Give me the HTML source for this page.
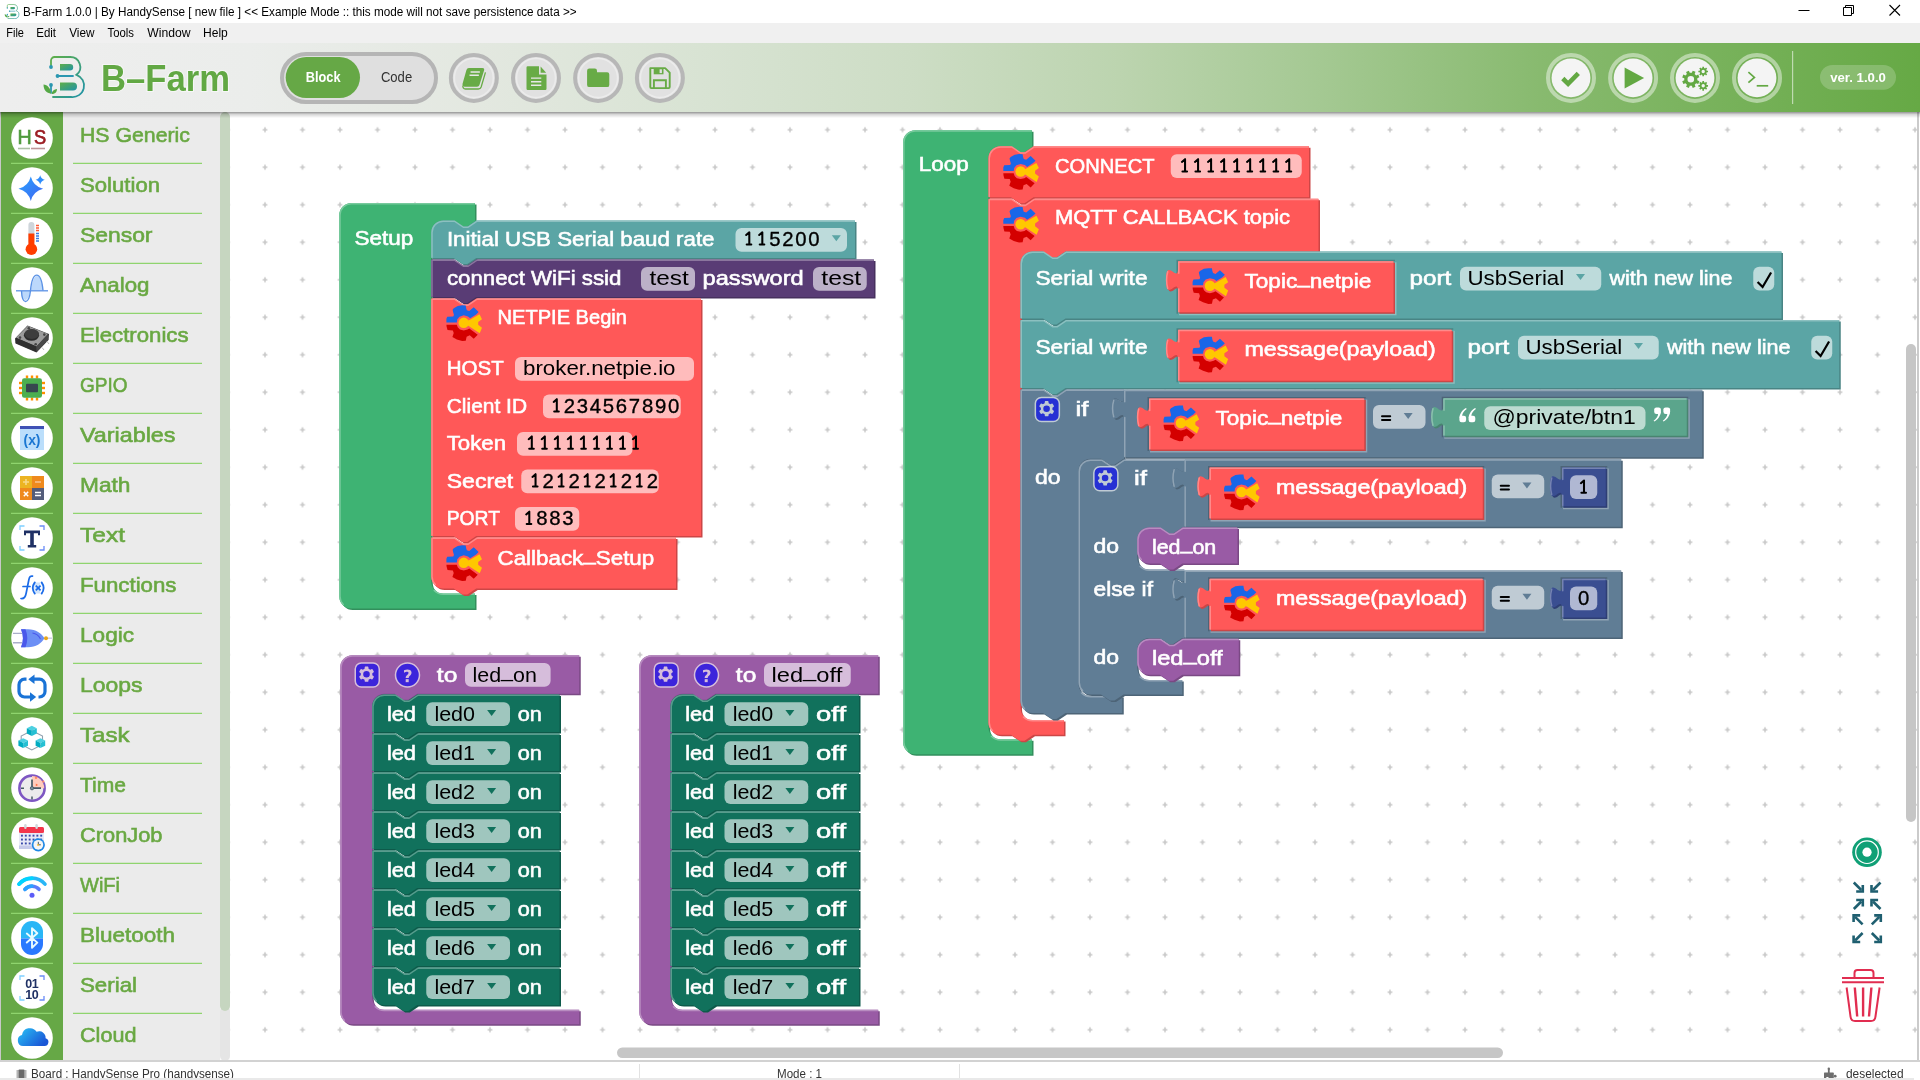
<!DOCTYPE html>
<html><head><meta charset="utf-8"><title>B-Farm</title>
<style>
html,body{margin:0;padding:0;background:#fff;}
body{width:1920px;height:1080px;overflow:hidden;position:relative;font-family:'Liberation Sans', sans-serif;}
#titlebar{position:absolute;left:0;top:0;width:1920px;height:23px;background:#fff;}
#menubar{position:absolute;left:0;top:23px;width:1920px;height:20px;background:#f0f0f0;}
#header{position:absolute;left:0;top:43px;width:1920px;height:69px;background:linear-gradient(90deg,#eeeeee 0%,#ebedeb 13%,#e3e8e0 25%,#d8e3d3 36.5%,#cdddc5 47.4%,#bcd4af 58.3%,#a3c891 69.3%,#88ba6f 80.2%,#66a945 100%);z-index:3;}
#hshadow{position:absolute;left:0;top:112px;width:1920px;height:6px;background:linear-gradient(180deg,rgba(0,0,0,0.42),rgba(0,0,0,0.16) 40%,rgba(0,0,0,0));z-index:3;}
#greenbar{position:absolute;left:1px;top:112px;width:62px;height:950px;background:#66a846;}
#catpanel{position:absolute;left:63px;top:112px;width:157px;height:950px;background:#ebebeb;}
#sbtrack{position:absolute;left:220px;top:112px;width:10px;height:950px;background:#fbfbfb;}
#sbthumb{position:absolute;left:220px;top:112px;width:10px;height:898.5px;background:#c6d6c0;border-radius:5px;}
#sbtail{position:absolute;left:220px;top:1006px;width:10px;height:54.5px;background:#e5e5e5;border-radius:5px;}
#leftline{position:absolute;left:0;top:112px;width:1px;height:950px;background:#c8c8c8;}
#status{position:absolute;left:0;top:1060px;width:1920px;height:20px;background:#fff;border-top:2px solid #d2d2d2;box-sizing:border-box;z-index:2;}
#botline{position:absolute;left:0;top:1078.3px;width:1914px;height:2px;background:#e9e9e9;z-index:6;}
#rightline{position:absolute;left:1917.4px;top:112px;width:1.6px;height:950px;background:#cbcbcb;}
svg{position:absolute;left:0;top:0;will-change:transform;}
text{font-family:'Liberation Sans', sans-serif;}
</style></head><body>
<div id="titlebar"></div><div id="menubar"></div>
<div id="greenbar"></div><div id="catpanel"></div><div id="sbtrack"></div><div id="sbtail"></div><div id="sbthumb"></div><div id="leftline"></div><div id="rightline"></div>
<svg width="1920" height="1080" viewBox="0 0 1920 1080" style="z-index:1">
<defs><pattern id="grid" patternUnits="userSpaceOnUse" width="37.5" height="37.5" x="246.25" y="111"><path d="M 16.35,18.75 h 4.8 M 18.75,16.35 v 4.8" stroke="#c9c9c9" stroke-width="1.6" fill="none"/></pattern><clipPath id="wsclip"><rect x="230" y="113" width="1688" height="949"/></clipPath></defs>
<g clip-path="url(#wsclip)">
<rect x="230" y="113" width="1688" height="949" fill="url(#grid)"/>
<path d="M 339.25,215 a 12,12 0 0,1 12,-12 H 475 v 17.5 H 476.25 l -9,6 -4.5,0 -9,-6 h -10.5 a 12,12 0 0,0 -12,12 v 349 a 12,12 0 0,0 12,12 H 475 v 15 H 351.25 a 12,12 0 0,1 -12,-12 z" fill="#328f5c" transform="translate(1.5,1.5)"/><path d="M 339.25,215 a 12,12 0 0,1 12,-12 H 475 v 17.5 H 476.25 l -9,6 -4.5,0 -9,-6 h -10.5 a 12,12 0 0,0 -12,12 v 349 a 12,12 0 0,0 12,12 H 475 v 15 H 351.25 a 12,12 0 0,1 -12,-12 z" fill="#3eb373"/><path d="M 340,215 A 11.25,11.25 0 0,1 351.25,203.75 H 474.25 M 434.23,590.52 A 12.75,12.75 0 0,0 443.25,594.25 H 474.25 M 343.3,604.45 A 11.25,11.25 0 0,1 340,596.5 V 215" fill="none" stroke="#78ca9d" stroke-width="1.5" stroke-linecap="round"/>
<text x="354.5" y="244.5" font-size="21" fill="#fff" textLength="58.8" lengthAdjust="spacingAndGlyphs" stroke="#fff" stroke-width="0.6">Setup</text>
<path d="M 431.25,232.5 a 12,12 0 0,1 12,-12 H 453.75 l 9,6 4.5,0 9,-6 H 855 v 37.5 H 476.25 l -9,6 -4.5,0 -9,-6 H 431.25 z" fill="#498484" transform="translate(1.5,1.5)"/><path d="M 431.25,232.5 a 12,12 0 0,1 12,-12 H 453.75 l 9,6 4.5,0 9,-6 H 855 v 37.5 H 476.25 l -9,6 -4.5,0 -9,-6 H 431.25 z" fill="#5ba5a5"/><path d="M 432,232.5 A 11.25,11.25 0 0,1 443.25,221.25 H 454.5 l 9,6 4.5,0 9,-6 H 854.25 M 432,257.25 V 232.5" fill="none" stroke="#8cc0c0" stroke-width="1.5" stroke-linecap="round"/>
<text x="446.9" y="245.6" font-size="21" fill="#fff" textLength="267.6" lengthAdjust="spacingAndGlyphs" stroke="#fff" stroke-width="0.6">Initial USB Serial baud rate</text>
<rect x="735.5" y="228" width="111.5" height="23.75" rx="6" fill="#fff" fill-opacity="0.6"/>
<text x="774.94" y="245.6" font-size="21" fill="#000" stroke="#000" stroke-width="0.35" text-anchor="middle" textLength="11.3" lengthAdjust="spacingAndGlyphs">5</text><text x="787.96" y="245.6" font-size="21" fill="#000" stroke="#000" stroke-width="0.35" text-anchor="middle" textLength="11.3" lengthAdjust="spacingAndGlyphs">2</text><text x="800.98" y="245.6" font-size="21" fill="#000" stroke="#000" stroke-width="0.35" text-anchor="middle" textLength="11.3" lengthAdjust="spacingAndGlyphs">0</text><text x="814" y="245.6" font-size="21" fill="#000" stroke="#000" stroke-width="0.35" text-anchor="middle" textLength="11.3" lengthAdjust="spacingAndGlyphs">0</text><path d="M 746.2,235 l 3.1,-2.7 V 244.5 M 746.7,244.5 h 4.6 M 759.22,235 l 3.1,-2.7 V 244.5 M 759.72,244.5 h 4.6" fill="none" stroke="#000" stroke-width="2.05" stroke-linecap="round" stroke-linejoin="round"/>
<path d="M 831.8,235.3 h 9 l -4.5,6 z" fill="#5ba5a5"/>
<path d="M 431.25,259.5 H 453.75 l 9,6 4.5,0 9,-6 H 874 v 37.5 H 476.25 l -9,6 -4.5,0 -9,-6 H 431.25 z" fill="#47305e" transform="translate(1.5,1.5)"/><path d="M 431.25,259.5 H 453.75 l 9,6 4.5,0 9,-6 H 874 v 37.5 H 476.25 l -9,6 -4.5,0 -9,-6 H 431.25 z" fill="#593c75"/><path d="M 432,260.25 H 454.5 l 9,6 4.5,0 9,-6 H 873.25 M 432,296.25 V 260.25" fill="none" stroke="#8b769e" stroke-width="1.5" stroke-linecap="round"/>
<text x="446.9" y="284.75" font-size="21" fill="#fff" textLength="174.5" lengthAdjust="spacingAndGlyphs" stroke="#fff" stroke-width="0.6">connect WiFi ssid</text>
<rect x="641" y="267" width="54" height="23.75" rx="6" fill="#fff" fill-opacity="0.6"/>
<text x="649.5" y="284.75" font-size="21" fill="#000" textLength="39.25" lengthAdjust="spacingAndGlyphs">test</text>
<text x="702.5" y="284.75" font-size="21" fill="#fff" textLength="101.25" lengthAdjust="spacingAndGlyphs" stroke="#fff" stroke-width="0.6">password</text>
<rect x="813" y="267" width="53.75" height="23.75" rx="6" fill="#fff" fill-opacity="0.6"/>
<text x="821.25" y="284.75" font-size="21" fill="#000" textLength="40" lengthAdjust="spacingAndGlyphs">test</text>
<path d="M 431.25,298.5 H 453.75 l 9,6 4.5,0 9,-6 H 701 v 237.5 H 476.25 l -9,6 -4.5,0 -9,-6 H 431.25 z" fill="#cc4646" transform="translate(1.5,1.5)"/><path d="M 431.25,298.5 H 453.75 l 9,6 4.5,0 9,-6 H 701 v 237.5 H 476.25 l -9,6 -4.5,0 -9,-6 H 431.25 z" fill="#ff5858"/><path d="M 432,299.25 H 454.5 l 9,6 4.5,0 9,-6 H 700.25 M 432,535.25 V 299.25" fill="none" stroke="#ff8a8a" stroke-width="1.5" stroke-linecap="round"/>
<g transform="translate(446.4,305.3)"><polygon points="0,17.11 0,13.56 0.89,11.33 6.89,11.11 7.56,9.56 6.89,7.33 6.22,4.44 7.33,2.89 11.33,0.67 15.78,0 19.33,0.22 19.78,2.89 20.44,4.89 22.89,5.78 27.33,2 32.22,6.67 29.78,9.11 23.78,12.89 21.56,11.11 17.33,10 13.11,11.33 10.89,14 10.44,17.11" fill="#1a66e8"/><polygon points="0,19.33 10.44,19.33 11.33,22 13.56,24.22 17.33,25.11 21.11,24.22 22.89,23.11 31.33,29.33 27.33,33.56 23.33,30 20.22,31.33 19.33,35.56 15.78,35.78 10.44,34.22 6,31.78 7.33,27.78 6.44,25.11 1.11,24.67 0.22,21.56" fill="#d40000"/><polygon points="21.11,15.56 24,14.09 33.11,8.89 35.56,14 31.78,16.67 31.78,19.56 35.56,22.44 33.33,28 23.78,21.64 21.11,20" fill="#ffc800"/><circle cx="17.33" cy="17.56" r="5.25" fill="#ffc800"/></g>
<text x="497.5" y="324.25" font-size="21" fill="#fff" textLength="129.5" lengthAdjust="spacingAndGlyphs" stroke="#fff" stroke-width="0.6">NETPIE Begin</text>
<text x="446.75" y="375" font-size="21" fill="#fff" textLength="57" lengthAdjust="spacingAndGlyphs" stroke="#fff" stroke-width="0.6">HOST</text>
<rect x="515" y="357" width="179" height="23.75" rx="6" fill="#fff" fill-opacity="0.6"/>
<text x="523" y="375" font-size="21" fill="#000" textLength="152.5" lengthAdjust="spacingAndGlyphs">broker.netpie.io</text>
<text x="446.75" y="412.5" font-size="21" fill="#fff" textLength="80.25" lengthAdjust="spacingAndGlyphs" stroke="#fff" stroke-width="0.6">Client ID</text>
<rect x="543" y="394.5" width="137.75" height="23.75" rx="6" fill="#fff" fill-opacity="0.6"/>
<text x="569.42" y="412.5" font-size="21" fill="#000" stroke="#000" stroke-width="0.35" text-anchor="middle" textLength="11.3" lengthAdjust="spacingAndGlyphs">2</text><text x="582.44" y="412.5" font-size="21" fill="#000" stroke="#000" stroke-width="0.35" text-anchor="middle" textLength="11.3" lengthAdjust="spacingAndGlyphs">3</text><text x="595.46" y="412.5" font-size="21" fill="#000" stroke="#000" stroke-width="0.35" text-anchor="middle" textLength="11.3" lengthAdjust="spacingAndGlyphs">4</text><text x="608.48" y="412.5" font-size="21" fill="#000" stroke="#000" stroke-width="0.35" text-anchor="middle" textLength="11.3" lengthAdjust="spacingAndGlyphs">5</text><text x="621.5" y="412.5" font-size="21" fill="#000" stroke="#000" stroke-width="0.35" text-anchor="middle" textLength="11.3" lengthAdjust="spacingAndGlyphs">6</text><text x="634.52" y="412.5" font-size="21" fill="#000" stroke="#000" stroke-width="0.35" text-anchor="middle" textLength="11.3" lengthAdjust="spacingAndGlyphs">7</text><text x="647.54" y="412.5" font-size="21" fill="#000" stroke="#000" stroke-width="0.35" text-anchor="middle" textLength="11.3" lengthAdjust="spacingAndGlyphs">8</text><text x="660.56" y="412.5" font-size="21" fill="#000" stroke="#000" stroke-width="0.35" text-anchor="middle" textLength="11.3" lengthAdjust="spacingAndGlyphs">9</text><text x="673.58" y="412.5" font-size="21" fill="#000" stroke="#000" stroke-width="0.35" text-anchor="middle" textLength="11.3" lengthAdjust="spacingAndGlyphs">0</text><path d="M 553.7,401.9 l 3.1,-2.7 V 411.4 M 554.2,411.4 h 4.6" fill="none" stroke="#000" stroke-width="2.05" stroke-linecap="round" stroke-linejoin="round"/>
<text x="446.75" y="449.75" font-size="21" fill="#fff" textLength="59.25" lengthAdjust="spacingAndGlyphs" stroke="#fff" stroke-width="0.6">Token</text>
<rect x="517" y="431.9" width="115.5" height="23.75" rx="6" fill="#fff" fill-opacity="0.6"/>
<path d="M 528.7,439.15 l 3.1,-2.7 V 448.65 M 529.2,448.65 h 4.6 M 541.72,439.15 l 3.1,-2.7 V 448.65 M 542.22,448.65 h 4.6 M 554.74,439.15 l 3.1,-2.7 V 448.65 M 555.24,448.65 h 4.6 M 567.76,439.15 l 3.1,-2.7 V 448.65 M 568.26,448.65 h 4.6 M 580.78,439.15 l 3.1,-2.7 V 448.65 M 581.28,448.65 h 4.6 M 593.8,439.15 l 3.1,-2.7 V 448.65 M 594.3,448.65 h 4.6 M 606.82,439.15 l 3.1,-2.7 V 448.65 M 607.32,448.65 h 4.6 M 619.84,439.15 l 3.1,-2.7 V 448.65 M 620.34,448.65 h 4.6 M 632.86,439.15 l 3.1,-2.7 V 448.65 M 633.36,448.65 h 4.6" fill="none" stroke="#000" stroke-width="2.05" stroke-linecap="round" stroke-linejoin="round"/>
<text x="446.75" y="487.5" font-size="21" fill="#fff" textLength="66.5" lengthAdjust="spacingAndGlyphs" stroke="#fff" stroke-width="0.6">Secret</text>
<rect x="521.25" y="469.4" width="137.5" height="23.75" rx="6" fill="#fff" fill-opacity="0.6"/>
<text x="548.17" y="487.5" font-size="21" fill="#000" stroke="#000" stroke-width="0.35" text-anchor="middle" textLength="11.3" lengthAdjust="spacingAndGlyphs">2</text><text x="574.21" y="487.5" font-size="21" fill="#000" stroke="#000" stroke-width="0.35" text-anchor="middle" textLength="11.3" lengthAdjust="spacingAndGlyphs">2</text><text x="600.25" y="487.5" font-size="21" fill="#000" stroke="#000" stroke-width="0.35" text-anchor="middle" textLength="11.3" lengthAdjust="spacingAndGlyphs">2</text><text x="626.29" y="487.5" font-size="21" fill="#000" stroke="#000" stroke-width="0.35" text-anchor="middle" textLength="11.3" lengthAdjust="spacingAndGlyphs">2</text><text x="652.33" y="487.5" font-size="21" fill="#000" stroke="#000" stroke-width="0.35" text-anchor="middle" textLength="11.3" lengthAdjust="spacingAndGlyphs">2</text><path d="M 532.45,476.9 l 3.1,-2.7 V 486.4 M 532.95,486.4 h 4.6 M 558.49,476.9 l 3.1,-2.7 V 486.4 M 558.99,486.4 h 4.6 M 584.53,476.9 l 3.1,-2.7 V 486.4 M 585.03,486.4 h 4.6 M 610.57,476.9 l 3.1,-2.7 V 486.4 M 611.07,486.4 h 4.6 M 636.61,476.9 l 3.1,-2.7 V 486.4 M 637.11,486.4 h 4.6" fill="none" stroke="#000" stroke-width="2.05" stroke-linecap="round" stroke-linejoin="round"/>
<text x="446.75" y="525" font-size="21" fill="#fff" textLength="53.25" lengthAdjust="spacingAndGlyphs" stroke="#fff" stroke-width="0.6">PORT</text>
<rect x="515" y="506.9" width="64.25" height="23.75" rx="6" fill="#fff" fill-opacity="0.6"/>
<text x="541.92" y="525" font-size="21" fill="#000" stroke="#000" stroke-width="0.35" text-anchor="middle" textLength="11.3" lengthAdjust="spacingAndGlyphs">8</text><text x="554.94" y="525" font-size="21" fill="#000" stroke="#000" stroke-width="0.35" text-anchor="middle" textLength="11.3" lengthAdjust="spacingAndGlyphs">8</text><text x="567.96" y="525" font-size="21" fill="#000" stroke="#000" stroke-width="0.35" text-anchor="middle" textLength="11.3" lengthAdjust="spacingAndGlyphs">3</text><path d="M 526.2,514.4 l 3.1,-2.7 V 523.9 M 526.7,523.9 h 4.6" fill="none" stroke="#000" stroke-width="2.05" stroke-linecap="round" stroke-linejoin="round"/>
<path d="M 431.25,537.5 H 453.75 l 9,6 4.5,0 9,-6 H 676 v 51 H 476.25 l -9,6 -4.5,0 -9,-6 H 443.25 a 12,12 0 0,1 -12,-12 z" fill="#cc4646" transform="translate(1.5,1.5)"/><path d="M 431.25,537.5 H 453.75 l 9,6 4.5,0 9,-6 H 676 v 51 H 476.25 l -9,6 -4.5,0 -9,-6 H 443.25 a 12,12 0 0,1 -12,-12 z" fill="#ff5858"/><path d="M 432,538.25 H 454.5 l 9,6 4.5,0 9,-6 H 675.25 M 435.3,584.45 A 11.25,11.25 0 0,1 432,576.5 V 538.25" fill="none" stroke="#ff8a8a" stroke-width="1.5" stroke-linecap="round"/>
<g transform="translate(446.4,545.3)"><polygon points="0,17.11 0,13.56 0.89,11.33 6.89,11.11 7.56,9.56 6.89,7.33 6.22,4.44 7.33,2.89 11.33,0.67 15.78,0 19.33,0.22 19.78,2.89 20.44,4.89 22.89,5.78 27.33,2 32.22,6.67 29.78,9.11 23.78,12.89 21.56,11.11 17.33,10 13.11,11.33 10.89,14 10.44,17.11" fill="#1a66e8"/><polygon points="0,19.33 10.44,19.33 11.33,22 13.56,24.22 17.33,25.11 21.11,24.22 22.89,23.11 31.33,29.33 27.33,33.56 23.33,30 20.22,31.33 19.33,35.56 15.78,35.78 10.44,34.22 6,31.78 7.33,27.78 6.44,25.11 1.11,24.67 0.22,21.56" fill="#d40000"/><polygon points="21.11,15.56 24,14.09 33.11,8.89 35.56,14 31.78,16.67 31.78,19.56 35.56,22.44 33.33,28 23.78,21.64 21.11,20" fill="#ffc800"/><circle cx="17.33" cy="17.56" r="5.25" fill="#ffc800"/></g>
<text x="497.5" y="564.5" font-size="21" fill="#fff" textLength="156.75" lengthAdjust="spacingAndGlyphs" stroke="#fff" stroke-width="0.6">Callback<tspan dy="-5">_</tspan><tspan dy="5">Setup</tspan></text>
<path d="M 340.25,667.25 a 12,12 0 0,1 12,-12 H 579.25 v 38.5 H 417.25 l -9,6 -4.5,0 -9,-6 h -10.5 a 12,12 0 0,0 -12,12 v 292 a 12,12 0 0,0 12,12 H 579.25 v 14.5 H 352.25 a 12,12 0 0,1 -12,-12 z" fill="#7a4984" transform="translate(1.5,1.5)"/><path d="M 340.25,667.25 a 12,12 0 0,1 12,-12 H 579.25 v 38.5 H 417.25 l -9,6 -4.5,0 -9,-6 h -10.5 a 12,12 0 0,0 -12,12 v 292 a 12,12 0 0,0 12,12 H 579.25 v 14.5 H 352.25 a 12,12 0 0,1 -12,-12 z" fill="#995ba5"/><path d="M 341,667.25 A 11.25,11.25 0 0,1 352.25,656 H 578.5 M 375.23,1006.77 A 12.75,12.75 0 0,0 384.25,1010.5 H 578.5 M 344.3,1020.2 A 11.25,11.25 0 0,1 341,1012.25 V 667.25" fill="none" stroke="#b88cc0" stroke-width="1.5" stroke-linecap="round"/>
<g transform="translate(354.5,662.25) scale(1.5)" opacity="0.6"><rect x="0.5" y="0.5" width="16" height="16" rx="4" fill="#00f" stroke="#fff" stroke-width="1"/><path d="m4.203,7.296 0,1.368 -0.92,0.677 -0.11,0.41 0.9,1.559 0.41,0.11 1.043,-0.457 1.187,0.683 0.127,1.134 0.3,0.3 1.8,0 0.3,-0.299 0.127,-1.138 1.185,-0.682 1.046,0.458 0.409,-0.11 0.9,-1.559 -0.11,-0.41 -0.92,-0.677 0,-1.366 0.92,-0.677 0.11,-0.41 -0.9,-1.559 -0.409,-0.109 -1.046,0.458 -1.185,-0.682 -0.127,-1.138 -0.3,-0.299 -1.8,0 -0.3,0.3 -0.126,1.135 -1.187,0.682 -1.043,-0.457 -0.41,0.11 -0.899,1.559 0.108,0.409z" fill="#fff"/><circle cx="8" cy="8" r="2.7" fill="#00f" stroke="#fff" stroke-width="1"/></g>
<g transform="translate(394.75,662.25) scale(1.5)" opacity="0.6"><circle cx="8.5" cy="8.5" r="8" fill="#00f" stroke="#fff" stroke-width="1"/><path d="m6.8,10h2c0.003,-0.617 0.271,-0.962 0.633,-1.266 2.875,-2.405 0.607,-5.534 -3.765,-3.874v1.7c3.12,-1.657 3.698,0.118 2.336,1.25 -1.201,0.998 -1.201,1.528 -1.204,2.19z" fill="#fff" transform="translate(0.5,0.5)"/><rect x="7.3" y="11.28" width="2" height="2" fill="#fff"/></g>
<text x="436.85" y="681.5" font-size="21" fill="#fff" textLength="20.5" lengthAdjust="spacingAndGlyphs" stroke="#fff" stroke-width="0.6">to</text>
<rect x="465" y="663" width="85.6" height="23.75" rx="6" fill="#fff" fill-opacity="0.6"/>
<text x="472.5" y="681.5" font-size="21" fill="#000" textLength="64.4" lengthAdjust="spacingAndGlyphs">led<tspan dy="-5">_</tspan><tspan dy="5">on</tspan></text>
<path d="M 372.25,706.5 a 12,12 0 0,1 12,-12 H 394.75 l 9,6 4.5,0 9,-6 H 559.5 v 37.5 H 417.25 l -9,6 -4.5,0 -9,-6 H 372.25 z" fill="#0e5a4a" transform="translate(1.5,1.5)"/><path d="M 372.25,706.5 a 12,12 0 0,1 12,-12 H 394.75 l 9,6 4.5,0 9,-6 H 559.5 v 37.5 H 417.25 l -9,6 -4.5,0 -9,-6 H 372.25 z" fill="#11715c"/><path d="M 373,706.5 A 11.25,11.25 0 0,1 384.25,695.25 H 395.5 l 9,6 4.5,0 9,-6 H 558.75 M 373,731.25 V 706.5" fill="none" stroke="#589c8d" stroke-width="1.5" stroke-linecap="round"/>
<text x="386.9" y="721" font-size="21" fill="#fff" textLength="29.1" lengthAdjust="spacingAndGlyphs" stroke="#fff" stroke-width="0.6">led</text>
<rect x="426.25" y="702.25" width="83.75" height="23.75" rx="6" fill="#fff" fill-opacity="0.6"/>
<text x="434.4" y="721" font-size="21" fill="#000" textLength="40.6" lengthAdjust="spacingAndGlyphs">led0</text>
<path d="M 487.15,710 h 9 l -4.5,6 z" fill="#11715c"/>
<text x="517.75" y="721" font-size="21" fill="#fff" textLength="24.15" lengthAdjust="spacingAndGlyphs" stroke="#fff" stroke-width="0.6">on</text>
<path d="M 372.25,733.5 H 394.75 l 9,6 4.5,0 9,-6 H 559.5 v 37.5 H 417.25 l -9,6 -4.5,0 -9,-6 H 372.25 z" fill="#0e5a4a" transform="translate(1.5,1.5)"/><path d="M 372.25,733.5 H 394.75 l 9,6 4.5,0 9,-6 H 559.5 v 37.5 H 417.25 l -9,6 -4.5,0 -9,-6 H 372.25 z" fill="#11715c"/><path d="M 373,734.25 H 395.5 l 9,6 4.5,0 9,-6 H 558.75 M 373,770.25 V 734.25" fill="none" stroke="#589c8d" stroke-width="1.5" stroke-linecap="round"/>
<text x="386.9" y="760" font-size="21" fill="#fff" textLength="29.1" lengthAdjust="spacingAndGlyphs" stroke="#fff" stroke-width="0.6">led</text>
<rect x="426.25" y="741.25" width="83.75" height="23.75" rx="6" fill="#fff" fill-opacity="0.6"/>
<text x="434.4" y="760" font-size="21" fill="#000" textLength="40.6" lengthAdjust="spacingAndGlyphs">led1</text>
<path d="M 487.15,749 h 9 l -4.5,6 z" fill="#11715c"/>
<text x="517.75" y="760" font-size="21" fill="#fff" textLength="24.15" lengthAdjust="spacingAndGlyphs" stroke="#fff" stroke-width="0.6">on</text>
<path d="M 372.25,772.5 H 394.75 l 9,6 4.5,0 9,-6 H 559.5 v 37.5 H 417.25 l -9,6 -4.5,0 -9,-6 H 372.25 z" fill="#0e5a4a" transform="translate(1.5,1.5)"/><path d="M 372.25,772.5 H 394.75 l 9,6 4.5,0 9,-6 H 559.5 v 37.5 H 417.25 l -9,6 -4.5,0 -9,-6 H 372.25 z" fill="#11715c"/><path d="M 373,773.25 H 395.5 l 9,6 4.5,0 9,-6 H 558.75 M 373,809.25 V 773.25" fill="none" stroke="#589c8d" stroke-width="1.5" stroke-linecap="round"/>
<text x="386.9" y="799" font-size="21" fill="#fff" textLength="29.1" lengthAdjust="spacingAndGlyphs" stroke="#fff" stroke-width="0.6">led</text>
<rect x="426.25" y="780.25" width="83.75" height="23.75" rx="6" fill="#fff" fill-opacity="0.6"/>
<text x="434.4" y="799" font-size="21" fill="#000" textLength="40.6" lengthAdjust="spacingAndGlyphs">led2</text>
<path d="M 487.15,788 h 9 l -4.5,6 z" fill="#11715c"/>
<text x="517.75" y="799" font-size="21" fill="#fff" textLength="24.15" lengthAdjust="spacingAndGlyphs" stroke="#fff" stroke-width="0.6">on</text>
<path d="M 372.25,811.5 H 394.75 l 9,6 4.5,0 9,-6 H 559.5 v 37.5 H 417.25 l -9,6 -4.5,0 -9,-6 H 372.25 z" fill="#0e5a4a" transform="translate(1.5,1.5)"/><path d="M 372.25,811.5 H 394.75 l 9,6 4.5,0 9,-6 H 559.5 v 37.5 H 417.25 l -9,6 -4.5,0 -9,-6 H 372.25 z" fill="#11715c"/><path d="M 373,812.25 H 395.5 l 9,6 4.5,0 9,-6 H 558.75 M 373,848.25 V 812.25" fill="none" stroke="#589c8d" stroke-width="1.5" stroke-linecap="round"/>
<text x="386.9" y="838" font-size="21" fill="#fff" textLength="29.1" lengthAdjust="spacingAndGlyphs" stroke="#fff" stroke-width="0.6">led</text>
<rect x="426.25" y="819.25" width="83.75" height="23.75" rx="6" fill="#fff" fill-opacity="0.6"/>
<text x="434.4" y="838" font-size="21" fill="#000" textLength="40.6" lengthAdjust="spacingAndGlyphs">led3</text>
<path d="M 487.15,827 h 9 l -4.5,6 z" fill="#11715c"/>
<text x="517.75" y="838" font-size="21" fill="#fff" textLength="24.15" lengthAdjust="spacingAndGlyphs" stroke="#fff" stroke-width="0.6">on</text>
<path d="M 372.25,850.5 H 394.75 l 9,6 4.5,0 9,-6 H 559.5 v 37.5 H 417.25 l -9,6 -4.5,0 -9,-6 H 372.25 z" fill="#0e5a4a" transform="translate(1.5,1.5)"/><path d="M 372.25,850.5 H 394.75 l 9,6 4.5,0 9,-6 H 559.5 v 37.5 H 417.25 l -9,6 -4.5,0 -9,-6 H 372.25 z" fill="#11715c"/><path d="M 373,851.25 H 395.5 l 9,6 4.5,0 9,-6 H 558.75 M 373,887.25 V 851.25" fill="none" stroke="#589c8d" stroke-width="1.5" stroke-linecap="round"/>
<text x="386.9" y="877" font-size="21" fill="#fff" textLength="29.1" lengthAdjust="spacingAndGlyphs" stroke="#fff" stroke-width="0.6">led</text>
<rect x="426.25" y="858.25" width="83.75" height="23.75" rx="6" fill="#fff" fill-opacity="0.6"/>
<text x="434.4" y="877" font-size="21" fill="#000" textLength="40.6" lengthAdjust="spacingAndGlyphs">led4</text>
<path d="M 487.15,866 h 9 l -4.5,6 z" fill="#11715c"/>
<text x="517.75" y="877" font-size="21" fill="#fff" textLength="24.15" lengthAdjust="spacingAndGlyphs" stroke="#fff" stroke-width="0.6">on</text>
<path d="M 372.25,889.5 H 394.75 l 9,6 4.5,0 9,-6 H 559.5 v 37.5 H 417.25 l -9,6 -4.5,0 -9,-6 H 372.25 z" fill="#0e5a4a" transform="translate(1.5,1.5)"/><path d="M 372.25,889.5 H 394.75 l 9,6 4.5,0 9,-6 H 559.5 v 37.5 H 417.25 l -9,6 -4.5,0 -9,-6 H 372.25 z" fill="#11715c"/><path d="M 373,890.25 H 395.5 l 9,6 4.5,0 9,-6 H 558.75 M 373,926.25 V 890.25" fill="none" stroke="#589c8d" stroke-width="1.5" stroke-linecap="round"/>
<text x="386.9" y="916" font-size="21" fill="#fff" textLength="29.1" lengthAdjust="spacingAndGlyphs" stroke="#fff" stroke-width="0.6">led</text>
<rect x="426.25" y="897.25" width="83.75" height="23.75" rx="6" fill="#fff" fill-opacity="0.6"/>
<text x="434.4" y="916" font-size="21" fill="#000" textLength="40.6" lengthAdjust="spacingAndGlyphs">led5</text>
<path d="M 487.15,905 h 9 l -4.5,6 z" fill="#11715c"/>
<text x="517.75" y="916" font-size="21" fill="#fff" textLength="24.15" lengthAdjust="spacingAndGlyphs" stroke="#fff" stroke-width="0.6">on</text>
<path d="M 372.25,928.5 H 394.75 l 9,6 4.5,0 9,-6 H 559.5 v 37.5 H 417.25 l -9,6 -4.5,0 -9,-6 H 372.25 z" fill="#0e5a4a" transform="translate(1.5,1.5)"/><path d="M 372.25,928.5 H 394.75 l 9,6 4.5,0 9,-6 H 559.5 v 37.5 H 417.25 l -9,6 -4.5,0 -9,-6 H 372.25 z" fill="#11715c"/><path d="M 373,929.25 H 395.5 l 9,6 4.5,0 9,-6 H 558.75 M 373,965.25 V 929.25" fill="none" stroke="#589c8d" stroke-width="1.5" stroke-linecap="round"/>
<text x="386.9" y="955" font-size="21" fill="#fff" textLength="29.1" lengthAdjust="spacingAndGlyphs" stroke="#fff" stroke-width="0.6">led</text>
<rect x="426.25" y="936.25" width="83.75" height="23.75" rx="6" fill="#fff" fill-opacity="0.6"/>
<text x="434.4" y="955" font-size="21" fill="#000" textLength="40.6" lengthAdjust="spacingAndGlyphs">led6</text>
<path d="M 487.15,944 h 9 l -4.5,6 z" fill="#11715c"/>
<text x="517.75" y="955" font-size="21" fill="#fff" textLength="24.15" lengthAdjust="spacingAndGlyphs" stroke="#fff" stroke-width="0.6">on</text>
<path d="M 372.25,967.5 H 394.75 l 9,6 4.5,0 9,-6 H 559.5 v 37.5 H 417.25 l -9,6 -4.5,0 -9,-6 H 384.25 a 12,12 0 0,1 -12,-12 z" fill="#0e5a4a" transform="translate(1.5,1.5)"/><path d="M 372.25,967.5 H 394.75 l 9,6 4.5,0 9,-6 H 559.5 v 37.5 H 417.25 l -9,6 -4.5,0 -9,-6 H 384.25 a 12,12 0 0,1 -12,-12 z" fill="#11715c"/><path d="M 373,968.25 H 395.5 l 9,6 4.5,0 9,-6 H 558.75 M 376.3,1000.95 A 11.25,11.25 0 0,1 373,993 V 968.25" fill="none" stroke="#589c8d" stroke-width="1.5" stroke-linecap="round"/>
<text x="386.9" y="994" font-size="21" fill="#fff" textLength="29.1" lengthAdjust="spacingAndGlyphs" stroke="#fff" stroke-width="0.6">led</text>
<rect x="426.25" y="975.25" width="83.75" height="23.75" rx="6" fill="#fff" fill-opacity="0.6"/>
<text x="434.4" y="994" font-size="21" fill="#000" textLength="40.6" lengthAdjust="spacingAndGlyphs">led7</text>
<path d="M 487.15,983 h 9 l -4.5,6 z" fill="#11715c"/>
<text x="517.75" y="994" font-size="21" fill="#fff" textLength="24.15" lengthAdjust="spacingAndGlyphs" stroke="#fff" stroke-width="0.6">on</text>
<path d="M 639.25,667.25 a 12,12 0 0,1 12,-12 H 878.25 v 38.5 H 715.5 l -9,6 -4.5,0 -9,-6 h -10.5 a 12,12 0 0,0 -12,12 v 292 a 12,12 0 0,0 12,12 H 878.25 v 14.5 H 651.25 a 12,12 0 0,1 -12,-12 z" fill="#7a4984" transform="translate(1.5,1.5)"/><path d="M 639.25,667.25 a 12,12 0 0,1 12,-12 H 878.25 v 38.5 H 715.5 l -9,6 -4.5,0 -9,-6 h -10.5 a 12,12 0 0,0 -12,12 v 292 a 12,12 0 0,0 12,12 H 878.25 v 14.5 H 651.25 a 12,12 0 0,1 -12,-12 z" fill="#995ba5"/><path d="M 640,667.25 A 11.25,11.25 0 0,1 651.25,656 H 877.5 M 673.48,1006.77 A 12.75,12.75 0 0,0 682.5,1010.5 H 877.5 M 643.3,1020.2 A 11.25,11.25 0 0,1 640,1012.25 V 667.25" fill="none" stroke="#b88cc0" stroke-width="1.5" stroke-linecap="round"/>
<g transform="translate(653.5,662.25) scale(1.5)" opacity="0.6"><rect x="0.5" y="0.5" width="16" height="16" rx="4" fill="#00f" stroke="#fff" stroke-width="1"/><path d="m4.203,7.296 0,1.368 -0.92,0.677 -0.11,0.41 0.9,1.559 0.41,0.11 1.043,-0.457 1.187,0.683 0.127,1.134 0.3,0.3 1.8,0 0.3,-0.299 0.127,-1.138 1.185,-0.682 1.046,0.458 0.409,-0.11 0.9,-1.559 -0.11,-0.41 -0.92,-0.677 0,-1.366 0.92,-0.677 0.11,-0.41 -0.9,-1.559 -0.409,-0.109 -1.046,0.458 -1.185,-0.682 -0.127,-1.138 -0.3,-0.299 -1.8,0 -0.3,0.3 -0.126,1.135 -1.187,0.682 -1.043,-0.457 -0.41,0.11 -0.899,1.559 0.108,0.409z" fill="#fff"/><circle cx="8" cy="8" r="2.7" fill="#00f" stroke="#fff" stroke-width="1"/></g>
<g transform="translate(693.75,662.25) scale(1.5)" opacity="0.6"><circle cx="8.5" cy="8.5" r="8" fill="#00f" stroke="#fff" stroke-width="1"/><path d="m6.8,10h2c0.003,-0.617 0.271,-0.962 0.633,-1.266 2.875,-2.405 0.607,-5.534 -3.765,-3.874v1.7c3.12,-1.657 3.698,0.118 2.336,1.25 -1.201,0.998 -1.201,1.528 -1.204,2.19z" fill="#fff" transform="translate(0.5,0.5)"/><rect x="7.3" y="11.28" width="2" height="2" fill="#fff"/></g>
<text x="735.85" y="681.5" font-size="21" fill="#fff" textLength="20.5" lengthAdjust="spacingAndGlyphs" stroke="#fff" stroke-width="0.6">to</text>
<rect x="764" y="663" width="86.75" height="23.75" rx="6" fill="#fff" fill-opacity="0.6"/>
<text x="771.5" y="681.5" font-size="21" fill="#000" textLength="70.75" lengthAdjust="spacingAndGlyphs">led<tspan dy="-5">_</tspan><tspan dy="5">off</tspan></text>
<path d="M 670.5,706.5 a 12,12 0 0,1 12,-12 H 693 l 9,6 4.5,0 9,-6 H 859 v 37.5 H 715.5 l -9,6 -4.5,0 -9,-6 H 670.5 z" fill="#0e5a4a" transform="translate(1.5,1.5)"/><path d="M 670.5,706.5 a 12,12 0 0,1 12,-12 H 693 l 9,6 4.5,0 9,-6 H 859 v 37.5 H 715.5 l -9,6 -4.5,0 -9,-6 H 670.5 z" fill="#11715c"/><path d="M 671.25,706.5 A 11.25,11.25 0 0,1 682.5,695.25 H 693.75 l 9,6 4.5,0 9,-6 H 858.25 M 671.25,731.25 V 706.5" fill="none" stroke="#589c8d" stroke-width="1.5" stroke-linecap="round"/>
<text x="685.15" y="721" font-size="21" fill="#fff" textLength="29.1" lengthAdjust="spacingAndGlyphs" stroke="#fff" stroke-width="0.6">led</text>
<rect x="724.5" y="702.25" width="83.75" height="23.75" rx="6" fill="#fff" fill-opacity="0.6"/>
<text x="732.65" y="721" font-size="21" fill="#000" textLength="40.6" lengthAdjust="spacingAndGlyphs">led0</text>
<path d="M 785.4,710 h 9 l -4.5,6 z" fill="#11715c"/>
<text x="816" y="721" font-size="21" fill="#fff" textLength="30" lengthAdjust="spacingAndGlyphs" stroke="#fff" stroke-width="0.6">off</text>
<path d="M 670.5,733.5 H 693 l 9,6 4.5,0 9,-6 H 859 v 37.5 H 715.5 l -9,6 -4.5,0 -9,-6 H 670.5 z" fill="#0e5a4a" transform="translate(1.5,1.5)"/><path d="M 670.5,733.5 H 693 l 9,6 4.5,0 9,-6 H 859 v 37.5 H 715.5 l -9,6 -4.5,0 -9,-6 H 670.5 z" fill="#11715c"/><path d="M 671.25,734.25 H 693.75 l 9,6 4.5,0 9,-6 H 858.25 M 671.25,770.25 V 734.25" fill="none" stroke="#589c8d" stroke-width="1.5" stroke-linecap="round"/>
<text x="685.15" y="760" font-size="21" fill="#fff" textLength="29.1" lengthAdjust="spacingAndGlyphs" stroke="#fff" stroke-width="0.6">led</text>
<rect x="724.5" y="741.25" width="83.75" height="23.75" rx="6" fill="#fff" fill-opacity="0.6"/>
<text x="732.65" y="760" font-size="21" fill="#000" textLength="40.6" lengthAdjust="spacingAndGlyphs">led1</text>
<path d="M 785.4,749 h 9 l -4.5,6 z" fill="#11715c"/>
<text x="816" y="760" font-size="21" fill="#fff" textLength="30" lengthAdjust="spacingAndGlyphs" stroke="#fff" stroke-width="0.6">off</text>
<path d="M 670.5,772.5 H 693 l 9,6 4.5,0 9,-6 H 859 v 37.5 H 715.5 l -9,6 -4.5,0 -9,-6 H 670.5 z" fill="#0e5a4a" transform="translate(1.5,1.5)"/><path d="M 670.5,772.5 H 693 l 9,6 4.5,0 9,-6 H 859 v 37.5 H 715.5 l -9,6 -4.5,0 -9,-6 H 670.5 z" fill="#11715c"/><path d="M 671.25,773.25 H 693.75 l 9,6 4.5,0 9,-6 H 858.25 M 671.25,809.25 V 773.25" fill="none" stroke="#589c8d" stroke-width="1.5" stroke-linecap="round"/>
<text x="685.15" y="799" font-size="21" fill="#fff" textLength="29.1" lengthAdjust="spacingAndGlyphs" stroke="#fff" stroke-width="0.6">led</text>
<rect x="724.5" y="780.25" width="83.75" height="23.75" rx="6" fill="#fff" fill-opacity="0.6"/>
<text x="732.65" y="799" font-size="21" fill="#000" textLength="40.6" lengthAdjust="spacingAndGlyphs">led2</text>
<path d="M 785.4,788 h 9 l -4.5,6 z" fill="#11715c"/>
<text x="816" y="799" font-size="21" fill="#fff" textLength="30" lengthAdjust="spacingAndGlyphs" stroke="#fff" stroke-width="0.6">off</text>
<path d="M 670.5,811.5 H 693 l 9,6 4.5,0 9,-6 H 859 v 37.5 H 715.5 l -9,6 -4.5,0 -9,-6 H 670.5 z" fill="#0e5a4a" transform="translate(1.5,1.5)"/><path d="M 670.5,811.5 H 693 l 9,6 4.5,0 9,-6 H 859 v 37.5 H 715.5 l -9,6 -4.5,0 -9,-6 H 670.5 z" fill="#11715c"/><path d="M 671.25,812.25 H 693.75 l 9,6 4.5,0 9,-6 H 858.25 M 671.25,848.25 V 812.25" fill="none" stroke="#589c8d" stroke-width="1.5" stroke-linecap="round"/>
<text x="685.15" y="838" font-size="21" fill="#fff" textLength="29.1" lengthAdjust="spacingAndGlyphs" stroke="#fff" stroke-width="0.6">led</text>
<rect x="724.5" y="819.25" width="83.75" height="23.75" rx="6" fill="#fff" fill-opacity="0.6"/>
<text x="732.65" y="838" font-size="21" fill="#000" textLength="40.6" lengthAdjust="spacingAndGlyphs">led3</text>
<path d="M 785.4,827 h 9 l -4.5,6 z" fill="#11715c"/>
<text x="816" y="838" font-size="21" fill="#fff" textLength="30" lengthAdjust="spacingAndGlyphs" stroke="#fff" stroke-width="0.6">off</text>
<path d="M 670.5,850.5 H 693 l 9,6 4.5,0 9,-6 H 859 v 37.5 H 715.5 l -9,6 -4.5,0 -9,-6 H 670.5 z" fill="#0e5a4a" transform="translate(1.5,1.5)"/><path d="M 670.5,850.5 H 693 l 9,6 4.5,0 9,-6 H 859 v 37.5 H 715.5 l -9,6 -4.5,0 -9,-6 H 670.5 z" fill="#11715c"/><path d="M 671.25,851.25 H 693.75 l 9,6 4.5,0 9,-6 H 858.25 M 671.25,887.25 V 851.25" fill="none" stroke="#589c8d" stroke-width="1.5" stroke-linecap="round"/>
<text x="685.15" y="877" font-size="21" fill="#fff" textLength="29.1" lengthAdjust="spacingAndGlyphs" stroke="#fff" stroke-width="0.6">led</text>
<rect x="724.5" y="858.25" width="83.75" height="23.75" rx="6" fill="#fff" fill-opacity="0.6"/>
<text x="732.65" y="877" font-size="21" fill="#000" textLength="40.6" lengthAdjust="spacingAndGlyphs">led4</text>
<path d="M 785.4,866 h 9 l -4.5,6 z" fill="#11715c"/>
<text x="816" y="877" font-size="21" fill="#fff" textLength="30" lengthAdjust="spacingAndGlyphs" stroke="#fff" stroke-width="0.6">off</text>
<path d="M 670.5,889.5 H 693 l 9,6 4.5,0 9,-6 H 859 v 37.5 H 715.5 l -9,6 -4.5,0 -9,-6 H 670.5 z" fill="#0e5a4a" transform="translate(1.5,1.5)"/><path d="M 670.5,889.5 H 693 l 9,6 4.5,0 9,-6 H 859 v 37.5 H 715.5 l -9,6 -4.5,0 -9,-6 H 670.5 z" fill="#11715c"/><path d="M 671.25,890.25 H 693.75 l 9,6 4.5,0 9,-6 H 858.25 M 671.25,926.25 V 890.25" fill="none" stroke="#589c8d" stroke-width="1.5" stroke-linecap="round"/>
<text x="685.15" y="916" font-size="21" fill="#fff" textLength="29.1" lengthAdjust="spacingAndGlyphs" stroke="#fff" stroke-width="0.6">led</text>
<rect x="724.5" y="897.25" width="83.75" height="23.75" rx="6" fill="#fff" fill-opacity="0.6"/>
<text x="732.65" y="916" font-size="21" fill="#000" textLength="40.6" lengthAdjust="spacingAndGlyphs">led5</text>
<path d="M 785.4,905 h 9 l -4.5,6 z" fill="#11715c"/>
<text x="816" y="916" font-size="21" fill="#fff" textLength="30" lengthAdjust="spacingAndGlyphs" stroke="#fff" stroke-width="0.6">off</text>
<path d="M 670.5,928.5 H 693 l 9,6 4.5,0 9,-6 H 859 v 37.5 H 715.5 l -9,6 -4.5,0 -9,-6 H 670.5 z" fill="#0e5a4a" transform="translate(1.5,1.5)"/><path d="M 670.5,928.5 H 693 l 9,6 4.5,0 9,-6 H 859 v 37.5 H 715.5 l -9,6 -4.5,0 -9,-6 H 670.5 z" fill="#11715c"/><path d="M 671.25,929.25 H 693.75 l 9,6 4.5,0 9,-6 H 858.25 M 671.25,965.25 V 929.25" fill="none" stroke="#589c8d" stroke-width="1.5" stroke-linecap="round"/>
<text x="685.15" y="955" font-size="21" fill="#fff" textLength="29.1" lengthAdjust="spacingAndGlyphs" stroke="#fff" stroke-width="0.6">led</text>
<rect x="724.5" y="936.25" width="83.75" height="23.75" rx="6" fill="#fff" fill-opacity="0.6"/>
<text x="732.65" y="955" font-size="21" fill="#000" textLength="40.6" lengthAdjust="spacingAndGlyphs">led6</text>
<path d="M 785.4,944 h 9 l -4.5,6 z" fill="#11715c"/>
<text x="816" y="955" font-size="21" fill="#fff" textLength="30" lengthAdjust="spacingAndGlyphs" stroke="#fff" stroke-width="0.6">off</text>
<path d="M 670.5,967.5 H 693 l 9,6 4.5,0 9,-6 H 859 v 37.5 H 715.5 l -9,6 -4.5,0 -9,-6 H 682.5 a 12,12 0 0,1 -12,-12 z" fill="#0e5a4a" transform="translate(1.5,1.5)"/><path d="M 670.5,967.5 H 693 l 9,6 4.5,0 9,-6 H 859 v 37.5 H 715.5 l -9,6 -4.5,0 -9,-6 H 682.5 a 12,12 0 0,1 -12,-12 z" fill="#11715c"/><path d="M 671.25,968.25 H 693.75 l 9,6 4.5,0 9,-6 H 858.25 M 674.55,1000.95 A 11.25,11.25 0 0,1 671.25,993 V 968.25" fill="none" stroke="#589c8d" stroke-width="1.5" stroke-linecap="round"/>
<text x="685.15" y="994" font-size="21" fill="#fff" textLength="29.1" lengthAdjust="spacingAndGlyphs" stroke="#fff" stroke-width="0.6">led</text>
<rect x="724.5" y="975.25" width="83.75" height="23.75" rx="6" fill="#fff" fill-opacity="0.6"/>
<text x="732.65" y="994" font-size="21" fill="#000" textLength="40.6" lengthAdjust="spacingAndGlyphs">led7</text>
<path d="M 785.4,983 h 9 l -4.5,6 z" fill="#11715c"/>
<text x="816" y="994" font-size="21" fill="#fff" textLength="30" lengthAdjust="spacingAndGlyphs" stroke="#fff" stroke-width="0.6">off</text>
<path d="M 903.1,142.25 a 12,12 0 0,1 12,-12 H 1032 v 16 H 1033.5 l -9,6 -4.5,0 -9,-6 h -10.5 a 12,12 0 0,0 -12,12 v 569 a 12,12 0 0,0 12,12 H 1032 v 15 H 915.1 a 12,12 0 0,1 -12,-12 z" fill="#328f5c" transform="translate(1.5,1.5)"/><path d="M 903.1,142.25 a 12,12 0 0,1 12,-12 H 1032 v 16 H 1033.5 l -9,6 -4.5,0 -9,-6 h -10.5 a 12,12 0 0,0 -12,12 v 569 a 12,12 0 0,0 12,12 H 1032 v 15 H 915.1 a 12,12 0 0,1 -12,-12 z" fill="#3eb373"/><path d="M 903.85,142.25 A 11.25,11.25 0 0,1 915.1,131 H 1031.25 M 991.48,736.27 A 12.75,12.75 0 0,0 1000.5,740 H 1031.25 M 907.15,750.2 A 11.25,11.25 0 0,1 903.85,742.25 V 142.25" fill="none" stroke="#78ca9d" stroke-width="1.5" stroke-linecap="round"/>
<text x="918.75" y="171" font-size="21" fill="#fff" textLength="50" lengthAdjust="spacingAndGlyphs" stroke="#fff" stroke-width="0.6">Loop</text>
<path d="M 988.5,158.25 a 12,12 0 0,1 12,-12 H 1011 l 9,6 4.5,0 9,-6 H 1309 v 51 H 1033.5 l -9,6 -4.5,0 -9,-6 H 988.5 z" fill="#cc4646" transform="translate(1.5,1.5)"/><path d="M 988.5,158.25 a 12,12 0 0,1 12,-12 H 1011 l 9,6 4.5,0 9,-6 H 1309 v 51 H 1033.5 l -9,6 -4.5,0 -9,-6 H 988.5 z" fill="#ff5858"/><path d="M 989.25,158.25 A 11.25,11.25 0 0,1 1000.5,147 H 1011.75 l 9,6 4.5,0 9,-6 H 1308.25 M 989.25,196.5 V 158.25" fill="none" stroke="#ff8a8a" stroke-width="1.5" stroke-linecap="round"/>
<g transform="translate(1003.3,154)"><polygon points="0,17.11 0,13.56 0.89,11.33 6.89,11.11 7.56,9.56 6.89,7.33 6.22,4.44 7.33,2.89 11.33,0.67 15.78,0 19.33,0.22 19.78,2.89 20.44,4.89 22.89,5.78 27.33,2 32.22,6.67 29.78,9.11 23.78,12.89 21.56,11.11 17.33,10 13.11,11.33 10.89,14 10.44,17.11" fill="#1a66e8"/><polygon points="0,19.33 10.44,19.33 11.33,22 13.56,24.22 17.33,25.11 21.11,24.22 22.89,23.11 31.33,29.33 27.33,33.56 23.33,30 20.22,31.33 19.33,35.56 15.78,35.78 10.44,34.22 6,31.78 7.33,27.78 6.44,25.11 1.11,24.67 0.22,21.56" fill="#d40000"/><polygon points="21.11,15.56 24,14.09 33.11,8.89 35.56,14 31.78,16.67 31.78,19.56 35.56,22.44 33.33,28 23.78,21.64 21.11,20" fill="#ffc800"/><circle cx="17.33" cy="17.56" r="5.25" fill="#ffc800"/></g>
<text x="1055" y="172.5" font-size="21" fill="#fff" textLength="99.5" lengthAdjust="spacingAndGlyphs" stroke="#fff" stroke-width="0.6">CONNECT</text>
<rect x="1170.75" y="154.25" width="131" height="23.75" rx="6" fill="#fff" fill-opacity="0.6"/>
<path d="M 1181.95,161.9 l 3.1,-2.7 V 171.4 M 1182.45,171.4 h 4.6 M 1194.97,161.9 l 3.1,-2.7 V 171.4 M 1195.47,171.4 h 4.6 M 1207.99,161.9 l 3.1,-2.7 V 171.4 M 1208.49,171.4 h 4.6 M 1221.01,161.9 l 3.1,-2.7 V 171.4 M 1221.51,171.4 h 4.6 M 1234.03,161.9 l 3.1,-2.7 V 171.4 M 1234.53,171.4 h 4.6 M 1247.05,161.9 l 3.1,-2.7 V 171.4 M 1247.55,171.4 h 4.6 M 1260.07,161.9 l 3.1,-2.7 V 171.4 M 1260.57,171.4 h 4.6 M 1273.09,161.9 l 3.1,-2.7 V 171.4 M 1273.59,171.4 h 4.6 M 1286.11,161.9 l 3.1,-2.7 V 171.4 M 1286.61,171.4 h 4.6" fill="none" stroke="#000" stroke-width="2.05" stroke-linecap="round" stroke-linejoin="round"/>
<path d="M 988.5,198.75 H 1011 l 9,6 4.5,0 9,-6 H 1318.5 v 52.75 H 1065.5 l -9,6 -4.5,0 -9,-6 h -10.5 a 12,12 0 0,0 -12,12 v 444.5 a 12,12 0 0,0 12,12 H 1064 v 14.75 H 1033.5 l -9,6 -4.5,0 -9,-6 H 1000.5 a 12,12 0 0,1 -12,-12 z" fill="#cc4646" transform="translate(1.5,1.5)"/><path d="M 988.5,198.75 H 1011 l 9,6 4.5,0 9,-6 H 1318.5 v 52.75 H 1065.5 l -9,6 -4.5,0 -9,-6 h -10.5 a 12,12 0 0,0 -12,12 v 444.5 a 12,12 0 0,0 12,12 H 1064 v 14.75 H 1033.5 l -9,6 -4.5,0 -9,-6 H 1000.5 a 12,12 0 0,1 -12,-12 z" fill="#ff5858"/><path d="M 989.25,199.5 H 1011.75 l 9,6 4.5,0 9,-6 H 1317.75 M 1023.48,717.02 A 12.75,12.75 0 0,0 1032.5,720.75 H 1063.25 M 992.55,730.7 A 11.25,11.25 0 0,1 989.25,722.75 V 199.5" fill="none" stroke="#ff8a8a" stroke-width="1.5" stroke-linecap="round"/>
<g transform="translate(1003.3,206.75)"><polygon points="0,17.11 0,13.56 0.89,11.33 6.89,11.11 7.56,9.56 6.89,7.33 6.22,4.44 7.33,2.89 11.33,0.67 15.78,0 19.33,0.22 19.78,2.89 20.44,4.89 22.89,5.78 27.33,2 32.22,6.67 29.78,9.11 23.78,12.89 21.56,11.11 17.33,10 13.11,11.33 10.89,14 10.44,17.11" fill="#1a66e8"/><polygon points="0,19.33 10.44,19.33 11.33,22 13.56,24.22 17.33,25.11 21.11,24.22 22.89,23.11 31.33,29.33 27.33,33.56 23.33,30 20.22,31.33 19.33,35.56 15.78,35.78 10.44,34.22 6,31.78 7.33,27.78 6.44,25.11 1.11,24.67 0.22,21.56" fill="#d40000"/><polygon points="21.11,15.56 24,14.09 33.11,8.89 35.56,14 31.78,16.67 31.78,19.56 35.56,22.44 33.33,28 23.78,21.64 21.11,20" fill="#ffc800"/><circle cx="17.33" cy="17.56" r="5.25" fill="#ffc800"/></g>
<text x="1055" y="224" font-size="21" fill="#fff" textLength="235" lengthAdjust="spacingAndGlyphs" stroke="#fff" stroke-width="0.6">MQTT CALLBACK topic</text>
<path d="M 1020.5,263.5 a 12,12 0 0,1 12,-12 H 1043 l 9,6 4.5,0 9,-6 H 1781.5 v 67 H 1065.5 l -9,6 -4.5,0 -9,-6 H 1020.5 z" fill="#498484" transform="translate(1.5,1.5)"/><path d="M 1020.5,263.5 a 12,12 0 0,1 12,-12 H 1043 l 9,6 4.5,0 9,-6 H 1781.5 v 67 H 1065.5 l -9,6 -4.5,0 -9,-6 H 1020.5 z" fill="#5ba5a5"/><path d="M 1021.25,263.5 A 11.25,11.25 0 0,1 1032.5,252.25 H 1043.75 l 9,6 4.5,0 9,-6 H 1780.75 M 1021.25,317.75 V 263.5" fill="none" stroke="#8cc0c0" stroke-width="1.5" stroke-linecap="round"/>
<text x="1035.5" y="284.5" font-size="21" fill="#fff" textLength="112" lengthAdjust="spacingAndGlyphs" stroke="#fff" stroke-width="0.6">Serial write</text>
<path d="M 1395.75,262.25 V 314.5 H 1179" fill="none" stroke="#8cc0c0" stroke-width="1.5"/>
<path d="M 1177.25,313.75 V 260.5 H 1395" fill="none" stroke="#498484" stroke-width="1.5"/>
<path d="M 1178,261.25 H 1393.5 v 51 H 1178 V 291.25 c 0,-15 -12,12 -12,-11.25 s 12,3.75 12,-11.25 z" fill="#cc4646" transform="translate(1.5,1.5)"/><path d="M 1178,261.25 H 1393.5 v 51 H 1178 V 291.25 c 0,-15 -12,12 -12,-11.25 s 12,3.75 12,-11.25 z" fill="#ff5858"/><path d="M 1178.75,262 H 1392.75 M 1178.75,311.5 V 291.25 v -2.25 m -11.04,-0.75 q -2.28,-8.25 0,-16.5 m 11.04,1.5 V 262" fill="none" stroke="#ff8a8a" stroke-width="1.5" stroke-linecap="round"/>
<g transform="translate(1192.6,268.15)"><polygon points="0,17.11 0,13.56 0.89,11.33 6.89,11.11 7.56,9.56 6.89,7.33 6.22,4.44 7.33,2.89 11.33,0.67 15.78,0 19.33,0.22 19.78,2.89 20.44,4.89 22.89,5.78 27.33,2 32.22,6.67 29.78,9.11 23.78,12.89 21.56,11.11 17.33,10 13.11,11.33 10.89,14 10.44,17.11" fill="#1a66e8"/><polygon points="0,19.33 10.44,19.33 11.33,22 13.56,24.22 17.33,25.11 21.11,24.22 22.89,23.11 31.33,29.33 27.33,33.56 23.33,30 20.22,31.33 19.33,35.56 15.78,35.78 10.44,34.22 6,31.78 7.33,27.78 6.44,25.11 1.11,24.67 0.22,21.56" fill="#d40000"/><polygon points="21.11,15.56 24,14.09 33.11,8.89 35.56,14 31.78,16.67 31.78,19.56 35.56,22.44 33.33,28 23.78,21.64 21.11,20" fill="#ffc800"/><circle cx="17.33" cy="17.56" r="5.25" fill="#ffc800"/></g>
<text x="1244.5" y="287.75" font-size="21" fill="#fff" textLength="126.75" lengthAdjust="spacingAndGlyphs" stroke="#fff" stroke-width="0.6">Topic<tspan dy="-5">_</tspan><tspan dy="5">netpie</tspan></text>
<text x="1409.5" y="285" font-size="21" fill="#fff" textLength="41.75" lengthAdjust="spacingAndGlyphs" stroke="#fff" stroke-width="0.6">port</text>
<rect x="1460" y="266.75" width="141.25" height="23.75" rx="6" fill="#fff" fill-opacity="0.6"/>
<text x="1467.5" y="285" font-size="21" fill="#000" textLength="96.75" lengthAdjust="spacingAndGlyphs">UsbSerial</text>
<path d="M 1576,274 h 9 l -4.5,6 z" fill="#5ba5a5"/>
<text x="1609.5" y="285" font-size="21" fill="#fff" textLength="123" lengthAdjust="spacingAndGlyphs" stroke="#fff" stroke-width="0.6">with new line</text>
<rect x="1753.25" y="266.75" width="21" height="23.75" rx="6" fill="#fff" fill-opacity="0.6"/>
<path d="M 1757.6,281.95 l 5,5.1 l 8.5,-14.5" fill="none" stroke="#000" stroke-width="2.2" stroke-linejoin="miter"/>
<path d="M 1020.5,320 H 1043 l 9,6 4.5,0 9,-6 H 1839.25 v 68 H 1065.5 l -9,6 -4.5,0 -9,-6 H 1020.5 z" fill="#498484" transform="translate(1.5,1.5)"/><path d="M 1020.5,320 H 1043 l 9,6 4.5,0 9,-6 H 1839.25 v 68 H 1065.5 l -9,6 -4.5,0 -9,-6 H 1020.5 z" fill="#5ba5a5"/><path d="M 1021.25,320.75 H 1043.75 l 9,6 4.5,0 9,-6 H 1838.5 M 1021.25,387.25 V 320.75" fill="none" stroke="#8cc0c0" stroke-width="1.5" stroke-linecap="round"/>
<text x="1035.5" y="353.5" font-size="21" fill="#fff" textLength="112" lengthAdjust="spacingAndGlyphs" stroke="#fff" stroke-width="0.6">Serial write</text>
<path d="M 1454,330.75 V 383 H 1179" fill="none" stroke="#8cc0c0" stroke-width="1.5"/>
<path d="M 1177.25,382.25 V 329 H 1453.25" fill="none" stroke="#498484" stroke-width="1.5"/>
<path d="M 1178,329.75 H 1451.75 v 51 H 1178 V 359.75 c 0,-15 -12,12 -12,-11.25 s 12,3.75 12,-11.25 z" fill="#cc4646" transform="translate(1.5,1.5)"/><path d="M 1178,329.75 H 1451.75 v 51 H 1178 V 359.75 c 0,-15 -12,12 -12,-11.25 s 12,3.75 12,-11.25 z" fill="#ff5858"/><path d="M 1178.75,330.5 H 1451 M 1178.75,380 V 359.75 v -2.25 m -11.04,-0.75 q -2.28,-8.25 0,-16.5 m 11.04,1.5 V 330.5" fill="none" stroke="#ff8a8a" stroke-width="1.5" stroke-linecap="round"/>
<g transform="translate(1192.6,336.65)"><polygon points="0,17.11 0,13.56 0.89,11.33 6.89,11.11 7.56,9.56 6.89,7.33 6.22,4.44 7.33,2.89 11.33,0.67 15.78,0 19.33,0.22 19.78,2.89 20.44,4.89 22.89,5.78 27.33,2 32.22,6.67 29.78,9.11 23.78,12.89 21.56,11.11 17.33,10 13.11,11.33 10.89,14 10.44,17.11" fill="#1a66e8"/><polygon points="0,19.33 10.44,19.33 11.33,22 13.56,24.22 17.33,25.11 21.11,24.22 22.89,23.11 31.33,29.33 27.33,33.56 23.33,30 20.22,31.33 19.33,35.56 15.78,35.78 10.44,34.22 6,31.78 7.33,27.78 6.44,25.11 1.11,24.67 0.22,21.56" fill="#d40000"/><polygon points="21.11,15.56 24,14.09 33.11,8.89 35.56,14 31.78,16.67 31.78,19.56 35.56,22.44 33.33,28 23.78,21.64 21.11,20" fill="#ffc800"/><circle cx="17.33" cy="17.56" r="5.25" fill="#ffc800"/></g>
<text x="1244.5" y="356.25" font-size="21" fill="#fff" textLength="191.25" lengthAdjust="spacingAndGlyphs" stroke="#fff" stroke-width="0.6">message(payload)</text>
<text x="1467.5" y="354" font-size="21" fill="#fff" textLength="41.75" lengthAdjust="spacingAndGlyphs" stroke="#fff" stroke-width="0.6">port</text>
<rect x="1518" y="335.75" width="140.75" height="23.75" rx="6" fill="#fff" fill-opacity="0.6"/>
<text x="1525.5" y="354" font-size="21" fill="#000" textLength="96.75" lengthAdjust="spacingAndGlyphs">UsbSerial</text>
<path d="M 1634,343 h 9 l -4.5,6 z" fill="#5ba5a5"/>
<text x="1667" y="354" font-size="21" fill="#fff" textLength="123.5" lengthAdjust="spacingAndGlyphs" stroke="#fff" stroke-width="0.6">with new line</text>
<rect x="1811.25" y="335.75" width="21" height="23.75" rx="6" fill="#fff" fill-opacity="0.6"/>
<path d="M 1815.6,350.95 l 5,5.1 l 8.5,-14.5" fill="none" stroke="#000" stroke-width="2.2" stroke-linejoin="miter"/>
<path d="M 1020.5,389.5 H 1043 l 9,6 4.5,0 9,-6 H 1124 v 7.5 c 0,15 -12,-12 -12,11.25 s 12,-3.75 12,11.25 v 39.25 H 1123.5 l -9,6 -4.5,0 -9,-6 h -10.5 a 12,12 0 0,0 -12,12 v 213.25 a 12,12 0 0,0 12,12 H 1122.25 v 17 H 1065.5 l -9,6 -4.5,0 -9,-6 H 1032.5 a 12,12 0 0,1 -12,-12 z" fill="#4d6477" transform="translate(1.5,1.5)"/><path d="M 1020.5,389.5 H 1043 l 9,6 4.5,0 9,-6 H 1124 v 7.5 c 0,15 -12,-12 -12,11.25 s 12,-3.75 12,11.25 v 39.25 H 1123.5 l -9,6 -4.5,0 -9,-6 h -10.5 a 12,12 0 0,0 -12,12 v 213.25 a 12,12 0 0,0 12,12 H 1122.25 v 17 H 1065.5 l -9,6 -4.5,0 -9,-6 H 1032.5 a 12,12 0 0,1 -12,-12 z" fill="#607d95"/><path d="M 1021.25,390.25 H 1043.75 l 9,6 4.5,0 9,-6 H 1123.25 M 1081.48,693.02 A 12.75,12.75 0 0,0 1090.5,696.75 H 1121.5 M 1024.55,708.95 A 11.25,11.25 0 0,1 1021.25,701 V 390.25" fill="none" stroke="#90a4b5" stroke-width="1.5" stroke-linecap="round"/>
<g transform="translate(1034.6,396.75) scale(1.5)" opacity="0.6"><rect x="0.5" y="0.5" width="16" height="16" rx="4" fill="#00f" stroke="#fff" stroke-width="1"/><path d="m4.203,7.296 0,1.368 -0.92,0.677 -0.11,0.41 0.9,1.559 0.41,0.11 1.043,-0.457 1.187,0.683 0.127,1.134 0.3,0.3 1.8,0 0.3,-0.299 0.127,-1.138 1.185,-0.682 1.046,0.458 0.409,-0.11 0.9,-1.559 -0.11,-0.41 -0.92,-0.677 0,-1.366 0.92,-0.677 0.11,-0.41 -0.9,-1.559 -0.409,-0.109 -1.046,0.458 -1.185,-0.682 -0.127,-1.138 -0.3,-0.299 -1.8,0 -0.3,0.3 -0.126,1.135 -1.187,0.682 -1.043,-0.457 -0.41,0.11 -0.899,1.559 0.108,0.409z" fill="#fff"/><circle cx="8" cy="8" r="2.7" fill="#00f" stroke="#fff" stroke-width="1"/></g>
<text x="1075.6" y="415.6" font-size="21" fill="#fff" textLength="13" lengthAdjust="spacingAndGlyphs" stroke="#fff" stroke-width="0.6">if</text>
<text x="1035" y="483.5" font-size="21" fill="#fff" textLength="25.6" lengthAdjust="spacingAndGlyphs" stroke="#fff" stroke-width="0.6">do</text>
<path d="M 1124,389.75 H 1702.25 v 67.5 H 1124 V 419.75 c 0,-15 -12,12 -12,-11.25 s 12,3.75 12,-11.25 z" fill="#4d6477" transform="translate(1.5,1.5)"/><path d="M 1124,389.75 H 1702.25 v 67.5 H 1124 V 419.75 c 0,-15 -12,12 -12,-11.25 s 12,3.75 12,-11.25 z" fill="#607d95"/><path d="M 1124.75,390.5 H 1701.5 M 1124.75,456.5 V 419.75 v -2.25 m -11.04,-0.75 q -2.28,-8.25 0,-16.5 m 11.04,1.5 V 390.5" fill="none" stroke="#90a4b5" stroke-width="1.5" stroke-linecap="round"/>
<path d="M 1366.5,399.5 V 451.75 H 1150" fill="none" stroke="#90a4b5" stroke-width="1.5"/>
<path d="M 1148.25,451 V 397.75 H 1365.75" fill="none" stroke="#4d6477" stroke-width="1.5"/>
<path d="M 1149,398.5 H 1364.25 v 51 H 1149 V 428.5 c 0,-15 -12,12 -12,-11.25 s 12,3.75 12,-11.25 z" fill="#cc4646" transform="translate(1.5,1.5)"/><path d="M 1149,398.5 H 1364.25 v 51 H 1149 V 428.5 c 0,-15 -12,12 -12,-11.25 s 12,3.75 12,-11.25 z" fill="#ff5858"/><path d="M 1149.75,399.25 H 1363.5 M 1149.75,448.75 V 428.5 v -2.25 m -11.04,-0.75 q -2.28,-8.25 0,-16.5 m 11.04,1.5 V 399.25" fill="none" stroke="#ff8a8a" stroke-width="1.5" stroke-linecap="round"/>
<g transform="translate(1163.6,405.4)"><polygon points="0,17.11 0,13.56 0.89,11.33 6.89,11.11 7.56,9.56 6.89,7.33 6.22,4.44 7.33,2.89 11.33,0.67 15.78,0 19.33,0.22 19.78,2.89 20.44,4.89 22.89,5.78 27.33,2 32.22,6.67 29.78,9.11 23.78,12.89 21.56,11.11 17.33,10 13.11,11.33 10.89,14 10.44,17.11" fill="#1a66e8"/><polygon points="0,19.33 10.44,19.33 11.33,22 13.56,24.22 17.33,25.11 21.11,24.22 22.89,23.11 31.33,29.33 27.33,33.56 23.33,30 20.22,31.33 19.33,35.56 15.78,35.78 10.44,34.22 6,31.78 7.33,27.78 6.44,25.11 1.11,24.67 0.22,21.56" fill="#d40000"/><polygon points="21.11,15.56 24,14.09 33.11,8.89 35.56,14 31.78,16.67 31.78,19.56 35.56,22.44 33.33,28 23.78,21.64 21.11,20" fill="#ffc800"/><circle cx="17.33" cy="17.56" r="5.25" fill="#ffc800"/></g>
<text x="1215.5" y="425" font-size="21" fill="#fff" textLength="126.75" lengthAdjust="spacingAndGlyphs" stroke="#fff" stroke-width="0.6">Topic<tspan dy="-5">_</tspan><tspan dy="5">netpie</tspan></text>
<rect x="1373" y="405" width="52.5" height="23.75" rx="6" fill="#fff" fill-opacity="0.6"/>
<path d="M 1382,416.2 h 8.2 M 1382,419.9 h 8.2" stroke="#000" stroke-width="2" stroke-linecap="round" fill="none"/>
<path d="M 1403.7,413 h 9 l -4.5,6 z" fill="#607d95"/>
<path d="M 1689,399.25 V 438 H 1444.25" fill="none" stroke="#90a4b5" stroke-width="1.5"/>
<path d="M 1442.5,437.25 V 397.5 H 1688.25" fill="none" stroke="#4d6477" stroke-width="1.5"/>
<path d="M 1443.25,398.25 H 1686.75 v 37.5 H 1443.25 V 428.25 c 0,-15 -12,12 -12,-11.25 s 12,3.75 12,-11.25 z" fill="#498470" transform="translate(1.5,1.5)"/><path d="M 1443.25,398.25 H 1686.75 v 37.5 H 1443.25 V 428.25 c 0,-15 -12,12 -12,-11.25 s 12,3.75 12,-11.25 z" fill="#5ba58c"/><path d="M 1444,399 H 1686 M 1444,435 V 428.25 v -2.25 m -11.04,-0.75 q -2.28,-8.25 0,-16.5 m 11.04,1.5 V 399" fill="none" stroke="#8cc0ae" stroke-width="1.5" stroke-linecap="round"/>
<rect x="1484.25" y="406.25" width="161.25" height="23.75" rx="6" fill="#fff" fill-opacity="0.6"/>
<text x="1492.5" y="424.25" font-size="21" fill="#000" textLength="143.25" lengthAdjust="spacingAndGlyphs">@private/btn1</text>
<g transform="translate(1459.4,408)" fill="#fff"><path d="M 0,10 C 0.3,5.5 3,2 6.6,0 L 7.3,0.9 C 4.6,2.9 2.9,5 2.7,8.2 z"/><rect x="0" y="7.7" width="6.7" height="6.5" rx="2.2"/><g transform="translate(9.2,0)"><path d="M 0,10 C 0.3,5.5 3,2 6.6,0 L 7.3,0.9 C 4.6,2.9 2.9,5 2.7,8.2 z"/><rect x="0" y="7.7" width="6.7" height="6.5" rx="2.2"/></g></g>
<g transform="translate(1653.6,407.4) rotate(180 8.25 7.1)" fill="#fff"><path d="M 0,10 C 0.3,5.5 3,2 6.6,0 L 7.3,0.9 C 4.6,2.9 2.9,5 2.7,8.2 z"/><rect x="0" y="7.7" width="6.7" height="6.5" rx="2.2"/><g transform="translate(9.2,0)"><path d="M 0,10 C 0.3,5.5 3,2 6.6,0 L 7.3,0.9 C 4.6,2.9 2.9,5 2.7,8.2 z"/><rect x="0" y="7.7" width="6.7" height="6.5" rx="2.2"/></g></g>
<path d="M 1078.5,471.5 a 12,12 0 0,1 12,-12 H 1101 l 9,6 4.5,0 9,-6 H 1184.4 v 7.5 c 0,15 -12,-12 -12,11.25 s 12,-3.75 12,11.25 v 38 H 1182.25 l -9,6 -4.5,0 -9,-6 h -10.5 a 12,12 0 0,0 -12,12 v 18 a 12,12 0 0,0 12,12 H 1184.4 v 7.5 c 0,15 -12,-12 -12,11.25 s 12,-3.75 12,11.25 v 38.5 H 1182.25 l -9,6 -4.5,0 -9,-6 h -10.5 a 12,12 0 0,0 -12,12 v 18 a 12,12 0 0,0 12,12 H 1182.25 v 14.5 H 1123.5 l -9,6 -4.5,0 -9,-6 H 1090.5 a 12,12 0 0,1 -12,-12 z" fill="#4d6477" transform="translate(1.5,1.5)"/><path d="M 1078.5,471.5 a 12,12 0 0,1 12,-12 H 1101 l 9,6 4.5,0 9,-6 H 1184.4 v 7.5 c 0,15 -12,-12 -12,11.25 s 12,-3.75 12,11.25 v 38 H 1182.25 l -9,6 -4.5,0 -9,-6 h -10.5 a 12,12 0 0,0 -12,12 v 18 a 12,12 0 0,0 12,12 H 1184.4 v 7.5 c 0,15 -12,-12 -12,11.25 s 12,-3.75 12,11.25 v 38.5 H 1182.25 l -9,6 -4.5,0 -9,-6 h -10.5 a 12,12 0 0,0 -12,12 v 18 a 12,12 0 0,0 12,12 H 1182.25 v 14.5 H 1123.5 l -9,6 -4.5,0 -9,-6 H 1090.5 a 12,12 0 0,1 -12,-12 z" fill="#607d95"/><path d="M 1079.25,471.5 A 11.25,11.25 0 0,1 1090.5,460.25 H 1101.75 l 9,6 4.5,0 9,-6 H 1183.65 M 1140.23,566.52 A 12.75,12.75 0 0,0 1149.25,570.25 H 1183.65 M 1140.23,677.02 A 12.75,12.75 0 0,0 1149.25,680.75 H 1181.5 M 1082.55,690.45 A 11.25,11.25 0 0,1 1079.25,682.5 V 471.5" fill="none" stroke="#90a4b5" stroke-width="1.5" stroke-linecap="round"/>
<g transform="translate(1093.1,466) scale(1.5)" opacity="0.6"><rect x="0.5" y="0.5" width="16" height="16" rx="4" fill="#00f" stroke="#fff" stroke-width="1"/><path d="m4.203,7.296 0,1.368 -0.92,0.677 -0.11,0.41 0.9,1.559 0.41,0.11 1.043,-0.457 1.187,0.683 0.127,1.134 0.3,0.3 1.8,0 0.3,-0.299 0.127,-1.138 1.185,-0.682 1.046,0.458 0.409,-0.11 0.9,-1.559 -0.11,-0.41 -0.92,-0.677 0,-1.366 0.92,-0.677 0.11,-0.41 -0.9,-1.559 -0.409,-0.109 -1.046,0.458 -1.185,-0.682 -0.127,-1.138 -0.3,-0.299 -1.8,0 -0.3,0.3 -0.126,1.135 -1.187,0.682 -1.043,-0.457 -0.41,0.11 -0.899,1.559 0.108,0.409z" fill="#fff"/><circle cx="8" cy="8" r="2.7" fill="#00f" stroke="#fff" stroke-width="1"/></g>
<text x="1134" y="485" font-size="21" fill="#fff" textLength="13" lengthAdjust="spacingAndGlyphs" stroke="#fff" stroke-width="0.6">if</text>
<text x="1093.4" y="552.5" font-size="21" fill="#fff" textLength="25.6" lengthAdjust="spacingAndGlyphs" stroke="#fff" stroke-width="0.6">do</text>
<text x="1093.5" y="595.5" font-size="21" fill="#fff" textLength="59.5" lengthAdjust="spacingAndGlyphs" stroke="#fff" stroke-width="0.6">else if</text>
<text x="1093.4" y="663.75" font-size="21" fill="#fff" textLength="25.6" lengthAdjust="spacingAndGlyphs" stroke="#fff" stroke-width="0.6">do</text>
<path d="M 1184.4,459.25 H 1621.25 v 67.5 H 1184.4 V 489.25 c 0,-15 -12,12 -12,-11.25 s 12,3.75 12,-11.25 z" fill="#4d6477" transform="translate(1.5,1.5)"/><path d="M 1184.4,459.25 H 1621.25 v 67.5 H 1184.4 V 489.25 c 0,-15 -12,12 -12,-11.25 s 12,3.75 12,-11.25 z" fill="#607d95"/><path d="M 1185.15,460 H 1620.5 M 1185.15,526 V 489.25 v -2.25 m -11.04,-0.75 q -2.28,-8.25 0,-16.5 m 11.04,1.5 V 460" fill="none" stroke="#90a4b5" stroke-width="1.5" stroke-linecap="round"/>
<path d="M 1485,468.5 V 520.75 H 1210.5" fill="none" stroke="#90a4b5" stroke-width="1.5"/>
<path d="M 1208.75,520 V 466.75 H 1484.25" fill="none" stroke="#4d6477" stroke-width="1.5"/>
<path d="M 1209.5,467.5 H 1482.75 v 51 H 1209.5 V 497.5 c 0,-15 -12,12 -12,-11.25 s 12,3.75 12,-11.25 z" fill="#cc4646" transform="translate(1.5,1.5)"/><path d="M 1209.5,467.5 H 1482.75 v 51 H 1209.5 V 497.5 c 0,-15 -12,12 -12,-11.25 s 12,3.75 12,-11.25 z" fill="#ff5858"/><path d="M 1210.25,468.25 H 1482 M 1210.25,517.75 V 497.5 v -2.25 m -11.04,-0.75 q -2.28,-8.25 0,-16.5 m 11.04,1.5 V 468.25" fill="none" stroke="#ff8a8a" stroke-width="1.5" stroke-linecap="round"/>
<g transform="translate(1224.1,474.4)"><polygon points="0,17.11 0,13.56 0.89,11.33 6.89,11.11 7.56,9.56 6.89,7.33 6.22,4.44 7.33,2.89 11.33,0.67 15.78,0 19.33,0.22 19.78,2.89 20.44,4.89 22.89,5.78 27.33,2 32.22,6.67 29.78,9.11 23.78,12.89 21.56,11.11 17.33,10 13.11,11.33 10.89,14 10.44,17.11" fill="#1a66e8"/><polygon points="0,19.33 10.44,19.33 11.33,22 13.56,24.22 17.33,25.11 21.11,24.22 22.89,23.11 31.33,29.33 27.33,33.56 23.33,30 20.22,31.33 19.33,35.56 15.78,35.78 10.44,34.22 6,31.78 7.33,27.78 6.44,25.11 1.11,24.67 0.22,21.56" fill="#d40000"/><polygon points="21.11,15.56 24,14.09 33.11,8.89 35.56,14 31.78,16.67 31.78,19.56 35.56,22.44 33.33,28 23.78,21.64 21.11,20" fill="#ffc800"/><circle cx="17.33" cy="17.56" r="5.25" fill="#ffc800"/></g>
<text x="1276" y="494" font-size="21" fill="#fff" textLength="191.25" lengthAdjust="spacingAndGlyphs" stroke="#fff" stroke-width="0.6">message(payload)</text>
<rect x="1491.75" y="474.5" width="52.5" height="23.75" rx="6" fill="#fff" fill-opacity="0.6"/>
<path d="M 1500.75,485.7 h 8.2 M 1500.75,489.4 h 8.2" stroke="#000" stroke-width="2" stroke-linecap="round" fill="none"/>
<path d="M 1522.45,482.5 h 9 l -4.5,6 z" fill="#607d95"/>
<path d="M 1608,468.5 V 508.5 H 1563" fill="none" stroke="#90a4b5" stroke-width="1.5"/>
<path d="M 1561.25,507.75 V 466.75 H 1607.25" fill="none" stroke="#4d6477" stroke-width="1.5"/>
<path d="M 1562,467.5 H 1605.75 v 38.75 H 1562 V 497.5 c 0,-15 -12,12 -12,-11.25 s 12,3.75 12,-11.25 z" fill="#2e3e74" transform="translate(1.5,1.5)"/><path d="M 1562,467.5 H 1605.75 v 38.75 H 1562 V 497.5 c 0,-15 -12,12 -12,-11.25 s 12,3.75 12,-11.25 z" fill="#3a4e91"/><path d="M 1562.75,468.25 H 1605 M 1562.75,505.5 V 497.5 v -2.25 m -11.04,-0.75 q -2.28,-8.25 0,-16.5 m 11.04,1.5 V 468.25" fill="none" stroke="#7583b2" stroke-width="1.5" stroke-linecap="round"/>
<rect x="1570" y="475.25" width="27.25" height="23.75" rx="6" fill="#fff" fill-opacity="0.6"/>
<path d="M 1580.9,483.2 l 3.1,-2.7 V 492.7 M 1581.4,492.7 h 4.6" fill="none" stroke="#000" stroke-width="2.05" stroke-linecap="round" stroke-linejoin="round"/>
<path d="M 1184.4,570.5 H 1621.25 v 67 H 1184.4 V 600.5 c 0,-15 -12,12 -12,-11.25 s 12,3.75 12,-11.25 z" fill="#4d6477" transform="translate(1.5,1.5)"/><path d="M 1184.4,570.5 H 1621.25 v 67 H 1184.4 V 600.5 c 0,-15 -12,12 -12,-11.25 s 12,3.75 12,-11.25 z" fill="#607d95"/><path d="M 1185.15,571.25 H 1620.5 M 1185.15,636.75 V 600.5 v -2.25 m -11.04,-0.75 q -2.28,-8.25 0,-16.5 m 11.04,1.5 V 571.25" fill="none" stroke="#90a4b5" stroke-width="1.5" stroke-linecap="round"/>
<path d="M 1485,579.75 V 632 H 1210.5" fill="none" stroke="#90a4b5" stroke-width="1.5"/>
<path d="M 1208.75,631.25 V 578 H 1484.25" fill="none" stroke="#4d6477" stroke-width="1.5"/>
<path d="M 1209.5,578.75 H 1482.75 v 51 H 1209.5 V 608.75 c 0,-15 -12,12 -12,-11.25 s 12,3.75 12,-11.25 z" fill="#cc4646" transform="translate(1.5,1.5)"/><path d="M 1209.5,578.75 H 1482.75 v 51 H 1209.5 V 608.75 c 0,-15 -12,12 -12,-11.25 s 12,3.75 12,-11.25 z" fill="#ff5858"/><path d="M 1210.25,579.5 H 1482 M 1210.25,629 V 608.75 v -2.25 m -11.04,-0.75 q -2.28,-8.25 0,-16.5 m 11.04,1.5 V 579.5" fill="none" stroke="#ff8a8a" stroke-width="1.5" stroke-linecap="round"/>
<g transform="translate(1224.1,585.65)"><polygon points="0,17.11 0,13.56 0.89,11.33 6.89,11.11 7.56,9.56 6.89,7.33 6.22,4.44 7.33,2.89 11.33,0.67 15.78,0 19.33,0.22 19.78,2.89 20.44,4.89 22.89,5.78 27.33,2 32.22,6.67 29.78,9.11 23.78,12.89 21.56,11.11 17.33,10 13.11,11.33 10.89,14 10.44,17.11" fill="#1a66e8"/><polygon points="0,19.33 10.44,19.33 11.33,22 13.56,24.22 17.33,25.11 21.11,24.22 22.89,23.11 31.33,29.33 27.33,33.56 23.33,30 20.22,31.33 19.33,35.56 15.78,35.78 10.44,34.22 6,31.78 7.33,27.78 6.44,25.11 1.11,24.67 0.22,21.56" fill="#d40000"/><polygon points="21.11,15.56 24,14.09 33.11,8.89 35.56,14 31.78,16.67 31.78,19.56 35.56,22.44 33.33,28 23.78,21.64 21.11,20" fill="#ffc800"/><circle cx="17.33" cy="17.56" r="5.25" fill="#ffc800"/></g>
<text x="1276" y="605.25" font-size="21" fill="#fff" textLength="191.25" lengthAdjust="spacingAndGlyphs" stroke="#fff" stroke-width="0.6">message(payload)</text>
<rect x="1491.75" y="585.75" width="52.5" height="23.75" rx="6" fill="#fff" fill-opacity="0.6"/>
<path d="M 1500.75,596.95 h 8.2 M 1500.75,600.65 h 8.2" stroke="#000" stroke-width="2" stroke-linecap="round" fill="none"/>
<path d="M 1522.45,593.75 h 9 l -4.5,6 z" fill="#607d95"/>
<path d="M 1608,579.75 V 619.75 H 1563" fill="none" stroke="#90a4b5" stroke-width="1.5"/>
<path d="M 1561.25,619 V 578 H 1607.25" fill="none" stroke="#4d6477" stroke-width="1.5"/>
<path d="M 1562,578.75 H 1605.75 v 38.75 H 1562 V 608.75 c 0,-15 -12,12 -12,-11.25 s 12,3.75 12,-11.25 z" fill="#2e3e74" transform="translate(1.5,1.5)"/><path d="M 1562,578.75 H 1605.75 v 38.75 H 1562 V 608.75 c 0,-15 -12,12 -12,-11.25 s 12,3.75 12,-11.25 z" fill="#3a4e91"/><path d="M 1562.75,579.5 H 1605 M 1562.75,616.75 V 608.75 v -2.25 m -11.04,-0.75 q -2.28,-8.25 0,-16.5 m 11.04,1.5 V 579.5" fill="none" stroke="#7583b2" stroke-width="1.5" stroke-linecap="round"/>
<rect x="1570" y="586.5" width="27.25" height="23.75" rx="6" fill="#fff" fill-opacity="0.6"/>
<text x="1583.6" y="605.05" font-size="21" fill="#000" stroke="#000" stroke-width="0.35" text-anchor="middle" textLength="11.3" lengthAdjust="spacingAndGlyphs">0</text>
<path d="M 1137.25,539.5 a 12,12 0 0,1 12,-12 H 1159.75 l 9,6 4.5,0 9,-6 H 1237.5 v 36 H 1182.25 l -9,6 -4.5,0 -9,-6 H 1149.25 a 12,12 0 0,1 -12,-12 z" fill="#7a4984" transform="translate(1.5,1.5)"/><path d="M 1137.25,539.5 a 12,12 0 0,1 12,-12 H 1159.75 l 9,6 4.5,0 9,-6 H 1237.5 v 36 H 1182.25 l -9,6 -4.5,0 -9,-6 H 1149.25 a 12,12 0 0,1 -12,-12 z" fill="#995ba5"/><path d="M 1138,539.5 A 11.25,11.25 0 0,1 1149.25,528.25 H 1160.5 l 9,6 4.5,0 9,-6 H 1236.75 M 1141.3,559.45 A 11.25,11.25 0 0,1 1138,551.5 V 539.5" fill="none" stroke="#b88cc0" stroke-width="1.5" stroke-linecap="round"/>
<text x="1151.9" y="553.5" font-size="21" fill="#fff" textLength="64.4" lengthAdjust="spacingAndGlyphs" stroke="#fff" stroke-width="0.6">led<tspan dy="-5">_</tspan><tspan dy="5">on</tspan></text>
<path d="M 1137.25,650.75 a 12,12 0 0,1 12,-12 H 1159.75 l 9,6 4.5,0 9,-6 H 1238.75 v 36 H 1182.25 l -9,6 -4.5,0 -9,-6 H 1149.25 a 12,12 0 0,1 -12,-12 z" fill="#7a4984" transform="translate(1.5,1.5)"/><path d="M 1137.25,650.75 a 12,12 0 0,1 12,-12 H 1159.75 l 9,6 4.5,0 9,-6 H 1238.75 v 36 H 1182.25 l -9,6 -4.5,0 -9,-6 H 1149.25 a 12,12 0 0,1 -12,-12 z" fill="#995ba5"/><path d="M 1138,650.75 A 11.25,11.25 0 0,1 1149.25,639.5 H 1160.5 l 9,6 4.5,0 9,-6 H 1238 M 1141.3,670.7 A 11.25,11.25 0 0,1 1138,662.75 V 650.75" fill="none" stroke="#b88cc0" stroke-width="1.5" stroke-linecap="round"/>
<text x="1151.9" y="664.5" font-size="21" fill="#fff" textLength="70.75" lengthAdjust="spacingAndGlyphs" stroke="#fff" stroke-width="0.6">led<tspan dy="-5">_</tspan><tspan dy="5">off</tspan></text>
<circle cx="1867" cy="852.2" r="14.8" fill="#10a076"/><circle cx="1867" cy="852.2" r="11.3" fill="none" stroke="#fff" stroke-width="1.2"/><circle cx="1867" cy="852.2" r="4.6" fill="#fff"/>
<path d="M 1853.8,882.5 L 1861.3,890" stroke="#1f5f70" stroke-width="2.6" fill="none"/><path d="M 1856.2,891.5 L 1862.8,891.5 L 1862.8,884.9" stroke="#1f5f70" stroke-width="2.6" fill="none" stroke-linejoin="miter"/>
<path d="M 1880.5,882.5 L 1873,890" stroke="#1f5f70" stroke-width="2.6" fill="none"/><path d="M 1878.1,891.5 L 1871.5,891.5 L 1871.5,884.9" stroke="#1f5f70" stroke-width="2.6" fill="none" stroke-linejoin="miter"/>
<path d="M 1853.8,909 L 1861.3,901.5" stroke="#1f5f70" stroke-width="2.6" fill="none"/><path d="M 1856.2,900 L 1862.8,900 L 1862.8,906.6" stroke="#1f5f70" stroke-width="2.6" fill="none" stroke-linejoin="miter"/>
<path d="M 1880.5,909 L 1873,901.5" stroke="#1f5f70" stroke-width="2.6" fill="none"/><path d="M 1878.1,900 L 1871.5,900 L 1871.5,906.6" stroke="#1f5f70" stroke-width="2.6" fill="none" stroke-linejoin="miter"/>
<path d="M 1862.6,924.4 L 1855.1,916.9" stroke="#1f5f70" stroke-width="2.6" fill="none"/><path d="M 1860.2,915.4 L 1853.6,915.4 L 1853.6,922" stroke="#1f5f70" stroke-width="2.6" fill="none" stroke-linejoin="miter"/>
<path d="M 1871.8,924.4 L 1879.3,916.9" stroke="#1f5f70" stroke-width="2.6" fill="none"/><path d="M 1874.2,915.4 L 1880.8,915.4 L 1880.8,922" stroke="#1f5f70" stroke-width="2.6" fill="none" stroke-linejoin="miter"/>
<path d="M 1862.6,933 L 1855.1,940.5" stroke="#1f5f70" stroke-width="2.6" fill="none"/><path d="M 1860.2,942 L 1853.6,942 L 1853.6,935.4" stroke="#1f5f70" stroke-width="2.6" fill="none" stroke-linejoin="miter"/>
<path d="M 1871.8,933 L 1879.3,940.5" stroke="#1f5f70" stroke-width="2.6" fill="none"/><path d="M 1874.2,942 L 1880.8,942 L 1880.8,935.4" stroke="#1f5f70" stroke-width="2.6" fill="none" stroke-linejoin="miter"/>
<path d="M 1845.5,986.5 H 1880.7 L 1876.5,1021.5 H 1849.7 z" fill="#fff"/><g fill="none" stroke="#e12d50" stroke-width="2"><path d="M 1854.5,978 v -5 a 3,3 0 0,1 3,-3 h 13 a 3,3 0 0,1 3,3 v 5"/><path d="M 1842,978 H 1884 M 1842,982.3 H 1884"/><path d="M 1846.6,987.5 L 1850.6,1017 a 4.5,4.5 0 0,0 4.5,4 h 15.8 a 4.5,4.5 0 0,0 4.5,-4 L 1879.6,987.5"/><path d="M 1854.8,987.5 L 1857.2,1016.5 M 1863.1,987.5 V 1016.5 M 1871.4,987.5 L 1869,1016.5" stroke-width="2.4"/></g>
<rect x="617" y="1047.5" width="886" height="10.5" rx="5.25" fill="#c6c6c6"/>
<rect x="1906" y="344" width="10" height="478" rx="5" fill="#c6c6c6"/>
</g>
<circle cx="32" cy="138" r="20.8" fill="#fff"/>
<path d="M 11,163.3 H 53" stroke="#8fd46e" stroke-width="1.2"/><path d="M 73,163.3 H 202" stroke="#8fd46e" stroke-width="1.2"/>
<text x="80" y="142.2" font-size="21" fill="#69a842" textLength="110" lengthAdjust="spacingAndGlyphs" stroke="#69a842" stroke-width="0.6">HS Generic</text>
<circle cx="32" cy="188" r="20.8" fill="#fff"/>
<path d="M 11,213.3 H 53" stroke="#8fd46e" stroke-width="1.2"/><path d="M 73,213.3 H 202" stroke="#8fd46e" stroke-width="1.2"/>
<text x="80" y="192.2" font-size="21" fill="#69a842" textLength="80" lengthAdjust="spacingAndGlyphs" stroke="#69a842" stroke-width="0.6">Solution</text>
<circle cx="32" cy="238" r="20.8" fill="#fff"/>
<path d="M 11,263.3 H 53" stroke="#8fd46e" stroke-width="1.2"/><path d="M 73,263.3 H 202" stroke="#8fd46e" stroke-width="1.2"/>
<text x="80" y="242.2" font-size="21" fill="#69a842" textLength="72.5" lengthAdjust="spacingAndGlyphs" stroke="#69a842" stroke-width="0.6">Sensor</text>
<circle cx="32" cy="288" r="20.8" fill="#fff"/>
<path d="M 11,313.3 H 53" stroke="#8fd46e" stroke-width="1.2"/><path d="M 73,313.3 H 202" stroke="#8fd46e" stroke-width="1.2"/>
<text x="80" y="292.2" font-size="21" fill="#69a842" textLength="69.5" lengthAdjust="spacingAndGlyphs" stroke="#69a842" stroke-width="0.6">Analog</text>
<circle cx="32" cy="338" r="20.8" fill="#fff"/>
<path d="M 11,363.3 H 53" stroke="#8fd46e" stroke-width="1.2"/><path d="M 73,363.3 H 202" stroke="#8fd46e" stroke-width="1.2"/>
<text x="80" y="342.2" font-size="21" fill="#69a842" textLength="108.5" lengthAdjust="spacingAndGlyphs" stroke="#69a842" stroke-width="0.6">Electronics</text>
<circle cx="32" cy="388" r="20.8" fill="#fff"/>
<path d="M 11,413.3 H 53" stroke="#8fd46e" stroke-width="1.2"/><path d="M 73,413.3 H 202" stroke="#8fd46e" stroke-width="1.2"/>
<text x="80" y="392.2" font-size="21" fill="#69a842" textLength="47.5" lengthAdjust="spacingAndGlyphs" stroke="#69a842" stroke-width="0.6">GPIO</text>
<circle cx="32" cy="438" r="20.8" fill="#fff"/>
<path d="M 11,463.3 H 53" stroke="#8fd46e" stroke-width="1.2"/><path d="M 73,463.3 H 202" stroke="#8fd46e" stroke-width="1.2"/>
<text x="80" y="442.2" font-size="21" fill="#69a842" textLength="95.5" lengthAdjust="spacingAndGlyphs" stroke="#69a842" stroke-width="0.6">Variables</text>
<circle cx="32" cy="488" r="20.8" fill="#fff"/>
<path d="M 11,513.3 H 53" stroke="#8fd46e" stroke-width="1.2"/><path d="M 73,513.3 H 202" stroke="#8fd46e" stroke-width="1.2"/>
<text x="80" y="492.2" font-size="21" fill="#69a842" textLength="50.5" lengthAdjust="spacingAndGlyphs" stroke="#69a842" stroke-width="0.6">Math</text>
<circle cx="32" cy="538" r="20.8" fill="#fff"/>
<path d="M 11,563.3 H 53" stroke="#8fd46e" stroke-width="1.2"/><path d="M 73,563.3 H 202" stroke="#8fd46e" stroke-width="1.2"/>
<text x="80" y="542.2" font-size="21" fill="#69a842" textLength="45" lengthAdjust="spacingAndGlyphs" stroke="#69a842" stroke-width="0.6">Text</text>
<circle cx="32" cy="588" r="20.8" fill="#fff"/>
<path d="M 11,613.3 H 53" stroke="#8fd46e" stroke-width="1.2"/><path d="M 73,613.3 H 202" stroke="#8fd46e" stroke-width="1.2"/>
<text x="80" y="592.2" font-size="21" fill="#69a842" textLength="96.5" lengthAdjust="spacingAndGlyphs" stroke="#69a842" stroke-width="0.6">Functions</text>
<circle cx="32" cy="638" r="20.8" fill="#fff"/>
<path d="M 11,663.3 H 53" stroke="#8fd46e" stroke-width="1.2"/><path d="M 73,663.3 H 202" stroke="#8fd46e" stroke-width="1.2"/>
<text x="80" y="642.2" font-size="21" fill="#69a842" textLength="54" lengthAdjust="spacingAndGlyphs" stroke="#69a842" stroke-width="0.6">Logic</text>
<circle cx="32" cy="688" r="20.8" fill="#fff"/>
<path d="M 11,713.3 H 53" stroke="#8fd46e" stroke-width="1.2"/><path d="M 73,713.3 H 202" stroke="#8fd46e" stroke-width="1.2"/>
<text x="80" y="692.2" font-size="21" fill="#69a842" textLength="62.5" lengthAdjust="spacingAndGlyphs" stroke="#69a842" stroke-width="0.6">Loops</text>
<circle cx="32" cy="738" r="20.8" fill="#fff"/>
<path d="M 11,763.3 H 53" stroke="#8fd46e" stroke-width="1.2"/><path d="M 73,763.3 H 202" stroke="#8fd46e" stroke-width="1.2"/>
<text x="80" y="742.2" font-size="21" fill="#69a842" textLength="49.5" lengthAdjust="spacingAndGlyphs" stroke="#69a842" stroke-width="0.6">Task</text>
<circle cx="32" cy="788" r="20.8" fill="#fff"/>
<path d="M 11,813.3 H 53" stroke="#8fd46e" stroke-width="1.2"/><path d="M 73,813.3 H 202" stroke="#8fd46e" stroke-width="1.2"/>
<text x="80" y="792.2" font-size="21" fill="#69a842" textLength="46" lengthAdjust="spacingAndGlyphs" stroke="#69a842" stroke-width="0.6">Time</text>
<circle cx="32" cy="838" r="20.8" fill="#fff"/>
<path d="M 11,863.3 H 53" stroke="#8fd46e" stroke-width="1.2"/><path d="M 73,863.3 H 202" stroke="#8fd46e" stroke-width="1.2"/>
<text x="80" y="842.2" font-size="21" fill="#69a842" textLength="82.5" lengthAdjust="spacingAndGlyphs" stroke="#69a842" stroke-width="0.6">CronJob</text>
<circle cx="32" cy="888" r="20.8" fill="#fff"/>
<path d="M 11,913.3 H 53" stroke="#8fd46e" stroke-width="1.2"/><path d="M 73,913.3 H 202" stroke="#8fd46e" stroke-width="1.2"/>
<text x="80" y="892.2" font-size="21" fill="#69a842" textLength="40" lengthAdjust="spacingAndGlyphs" stroke="#69a842" stroke-width="0.6">WiFi</text>
<circle cx="32" cy="938" r="20.8" fill="#fff"/>
<path d="M 11,963.3 H 53" stroke="#8fd46e" stroke-width="1.2"/><path d="M 73,963.3 H 202" stroke="#8fd46e" stroke-width="1.2"/>
<text x="80" y="942.2" font-size="21" fill="#69a842" textLength="95" lengthAdjust="spacingAndGlyphs" stroke="#69a842" stroke-width="0.6">Bluetooth</text>
<circle cx="32" cy="988" r="20.8" fill="#fff"/>
<path d="M 11,1013.3 H 53" stroke="#8fd46e" stroke-width="1.2"/><path d="M 73,1013.3 H 202" stroke="#8fd46e" stroke-width="1.2"/>
<text x="80" y="992.2" font-size="21" fill="#69a842" textLength="57" lengthAdjust="spacingAndGlyphs" stroke="#69a842" stroke-width="0.6">Serial</text>
<circle cx="32" cy="1038" r="20.8" fill="#fff"/>
<text x="80" y="1042.2" font-size="21" fill="#69a842" textLength="56.5" lengthAdjust="spacingAndGlyphs" stroke="#69a842" stroke-width="0.6">Cloud</text>
<g transform="translate(32,138)"><text x="-14.6" y="6.4" font-size="21" fill="#4e9a3c" stroke="#4e9a3c" stroke-width="0.7" textLength="14.2" lengthAdjust="spacingAndGlyphs">H</text><text x="1.9" y="6.4" font-size="21" fill="#9b1c22" stroke="#9b1c22" stroke-width="0.7" textLength="12.2" lengthAdjust="spacingAndGlyphs">S</text><path d="M -14,10.5 h 12" stroke="#8aa77f" stroke-width="1.6" opacity="0.7"/><path d="M -1,10.5 h 14" stroke="#a46a6e" stroke-width="1.6" opacity="0.7"/></g>
<g transform="translate(32,188)"><defs><linearGradient id="spk" x1="0" y1="0" x2="1" y2="1"><stop offset="0" stop-color="#29a3ff"/><stop offset="1" stop-color="#4163f0"/></linearGradient></defs><path d="M -1.2,-11.5 Q 1.26,-1.66 11.1,0.8 Q 1.26,3.26 -1.2,13.1 Q -3.66,3.26 -13.5,0.8 Q -3.66,-1.66 -1.2,-11.5 z" fill="url(#spk)"/><path d="M 8.2,-12.8 Q 9.21,-9.21 12.8,-8.2 Q 9.21,-7.19 8.2,-3.6 Q 7.19,-7.19 3.6,-8.2 Q 7.19,-9.21 8.2,-12.8 z" fill="#2f8dfb"/></g>
<g transform="translate(32,238)"><rect x="-3.6" y="-16" width="6" height="22" rx="3" fill="#cfd5da"/><rect x="-3.6" y="-4.5" width="6" height="12" fill="#ff3d00"/><circle cx="-0.6" cy="11.2" r="5.8" fill="#ff3d00"/><path d="M 4,-12.5 h 3 M 4,-10 h 3 M 4,-7.5 h 3" stroke="#ff5a36" stroke-width="1.3"/><path d="M 4,-4.5 h 3 M 4,-2 h 3 M 4,0.5 h 3 M 4,3 h 3" stroke="#3b7be0" stroke-width="1.3"/></g>
<g transform="translate(32,288)"><path d="M -10.5,3 C -10,15 -3.5,15 -2,3 z" fill="#bcd8fb"/><path d="M -1,2.5 C 1,-17 9,-17 11,2.5 z" fill="#bcd8fb"/><path d="M -10.5,3 C -10,17 -3,17 -1.5,2.5 C 0.5,-18 9,-18 11,2.5" fill="none" stroke="#5b92e5" stroke-width="1.4"/><path d="M -16,2.8 H 16" stroke="#5b92e5" stroke-width="1.3"/></g>
<g transform="translate(32,338)"><path d="M -17,0.5 L -4.5,-12.5 L 17,-4 L 16.5,2 L 4.5,14.5 L -16.5,5.5 z" fill="#3a3a3a"/><path d="M -16,-0.2 L -4.3,-12 L 16,-4 L 4.5,8.6 z" fill="#9b9b9b"/><path d="M -16,-0.2 L 4.5,8.6 L 4.5,14 L -16.3,5 z" fill="#2e2e2e"/><path d="M 4.5,8.6 L 16,-4 L 16.3,1.6 L 4.5,14 z" fill="#484848"/><ellipse cx="-0.5" cy="-2.8" rx="7.6" ry="5.6" fill="#2b2b2b"/><ellipse cx="-0.2" cy="-4" rx="7.2" ry="5" fill="#3d3d3d"/><circle cx="-12" cy="-0.4" r="1.3" fill="#444"/><circle cx="-3.2" cy="-9.8" r="1.3" fill="#444"/><circle cx="12.3" cy="-3.4" r="1.3" fill="#444"/><circle cx="3.7" cy="6.2" r="1.3" fill="#444"/><path d="M 10,9.5 l 2,2.5 M 15,3.5 l 2,2.5" stroke="#bbb" stroke-width="1"/></g>
<g transform="translate(32,388)"><rect x="-6.2" y="-12.5" width="2.4" height="3" fill="#ff8f00"/><rect x="-6.2" y="9.5" width="2.4" height="3" fill="#ff8f00"/><rect x="-13" y="-6.2" width="3" height="2.4" fill="#ff8f00"/><rect x="10" y="-6.2" width="3" height="2.4" fill="#ff8f00"/><rect x="-1.2" y="-12.5" width="2.4" height="3" fill="#ff8f00"/><rect x="-1.2" y="9.5" width="2.4" height="3" fill="#ff8f00"/><rect x="-13" y="-1.2" width="3" height="2.4" fill="#ff8f00"/><rect x="10" y="-1.2" width="3" height="2.4" fill="#ff8f00"/><rect x="3.8" y="-12.5" width="2.4" height="3" fill="#ff8f00"/><rect x="3.8" y="9.5" width="2.4" height="3" fill="#ff8f00"/><rect x="-13" y="3.8" width="3" height="2.4" fill="#ff8f00"/><rect x="10" y="3.8" width="3" height="2.4" fill="#ff8f00"/><rect x="-10" y="-9.8" width="20" height="19.6" rx="2.2" fill="#4caf50"/><rect x="-6" y="-4.2" width="12" height="8.4" rx="1" fill="#37474f"/></g>
<g transform="translate(32,438)"><rect x="-12" y="-12" width="24" height="24" fill="#bbdefb"/><rect x="-12" y="-12" width="24" height="3" fill="#3f51b5"/><text x="0" y="6.5" font-size="15" font-weight="bold" fill="#1976d2" text-anchor="middle" textLength="17" lengthAdjust="spacingAndGlyphs">(x)</text></g>
<g transform="translate(32,488)"><rect x="-12" y="-12" width="12" height="12" fill="#ecb422"/><rect x="0" y="-12" width="12" height="12" fill="#ef8a1d"/><rect x="-12" y="0" width="12" height="12" fill="#ef8a1d"/><rect x="0" y="0" width="12" height="12" fill="#545d7a"/><path d="M -9,-6 h 6 M -6,-9 v 6" stroke="#f6d98a" stroke-width="1.6"/><path d="M 3,-6 h 6" stroke="#f7c08a" stroke-width="1.6"/><path d="M -8.2,3.8 l 4.4,4.4 M -3.8,3.8 l -4.4,4.4" stroke="#fff" stroke-width="1.5"/><path d="M 3,4.5 h 6 M 3,7.6 h 6" stroke="#fff" stroke-width="1.5"/></g>
<g transform="translate(32,538)"><path d="M -12,-8 v -4 h 4.5 M -12,8 v 4 h 4.5" fill="none" stroke="#7fd0ff" stroke-width="1.3"/><path d="M 12,-8 v -4 h -4.5 M 12,8 v 4 h -4.5" fill="none" stroke="#6a8cf7" stroke-width="1.3"/><path d="M -8,-7.5 h 16 v 4.8 h -2 v -2 h -4.2 v 11.8 h 2.4 v 2.4 h -8.4 v -2.4 h 2.4 v -11.8 h -4.2 v 2 h -2 z" fill="#1f3064"/></g>
<g transform="translate(32,588)"><path d="M -11,10.5 c 3,0.5 4.5,-1.5 5.2,-5.5 l 2.6,-13 c 0.6,-3.2 1.8,-4.3 3.7,-3.9" fill="none" stroke="#1b6be8" stroke-width="1.7" stroke-linecap="round"/><path d="M -9,-1.5 h 7" stroke="#1b6be8" stroke-width="1.7" stroke-linecap="round"/><rect x="2.3" y="-5.5" width="5.8" height="11" fill="#cfe3fb"/><path d="M 2.8,-5.6 c -2.6,3.6 -2.6,7.6 0,11.2 M 9.6,-5.6 c 2.6,3.6 2.6,7.6 0,11.2" fill="none" stroke="#1b6be8" stroke-width="1.8" stroke-linecap="round"/><path d="M 3.8,-2.4 l 4.8,4.8 M 8.6,-2.4 l -4.8,4.8" stroke="#1b6be8" stroke-width="1.7"/></g>
<g transform="translate(32,638)"><path d="M -19,-4.6 h 9 M -19,4.8 h 9" stroke="#a9aec9" stroke-width="1.4"/><path d="M 13,0.2 h 7" stroke="#c9cbe0" stroke-width="1.4"/><path d="M -11,-8.8 h 7 c 8,0 13.5,4 16.5,9 c -3,5 -8.5,9 -16.5,9 h -7 c 2.6,-6 2.6,-12 0,-18 z" fill="#6c8ff5"/><path d="M -11,-8.8 h 4.5 c 2.4,6 2.4,12 0,18 h -4.5 c 2.6,-6 2.6,-12 0,-18 z" fill="#4a58ea"/><path d="M 0.5,-5 c 4,0.6 6.5,3 8,6" fill="none" stroke="#4a58ea" stroke-width="1.1"/><circle cx="14" cy="0.2" r="2" fill="#e8a619"/></g>
<g transform="translate(32,688)"><g fill="none" stroke="#1a73d6" stroke-width="3.2"><path d="M -5.5,-8.8 h -2 a 5.5,5.5 0 0,0 -5.5,5.5 v 6.8 a 5.5,5.5 0 0,0 5.5,5.5 h 6"/><path d="M 6.5,9 h 1 a 5.5,5.5 0 0,0 5.5,-5.5 v -6.8 a 5.5,5.5 0 0,0 -5.5,-5.5 h -6"/></g><path d="M 2.5,-13.5 v 9.4 l -6.2,-4.7 z" fill="#1a73d6"/><path d="M -2,4.3 v 9.4 l 6.2,-4.7 z" fill="#1a73d6"/></g>
<g transform="translate(32,738)"><path d="M -0.2,-7.5 L 10.5,-2 V 6.5 L -0.2,12 L -10.8,6.5 V -2 z" fill="none" stroke="#90a0ae" stroke-width="1.1"/><path d="M -0.2,-12.2 l 5,2.5 l -5,2.5 l -5,-2.5 z" fill="#4dd0e1"/><path d="M -5.2,-9.7 l 5,2.5 v 5.25 l -5,-2.5 z" fill="#00acc1"/><path d="M -0.2,-7.2 l 5,-2.5 v 5.25 l -5,2.5 z" fill="#26c0d3"/><path d="M -8.8,0.2 l 4.8,2.4 l -4.8,2.4 l -4.8,-2.4 z" fill="#4dd0e1"/><path d="M -13.6,2.6 l 4.8,2.4 v 5.04 l -4.8,-2.4 z" fill="#00acc1"/><path d="M -8.8,5 l 4.8,-2.4 v 5.04 l -4.8,2.4 z" fill="#26c0d3"/><path d="M 8.4,0.2 l 4.8,2.4 l -4.8,2.4 l -4.8,-2.4 z" fill="#4dd0e1"/><path d="M 3.6,2.6 l 4.8,2.4 v 5.04 l -4.8,-2.4 z" fill="#00acc1"/><path d="M 8.4,5 l 4.8,-2.4 v 5.04 l -4.8,2.4 z" fill="#26c0d3"/></g>
<g transform="translate(32,788)"><circle cx="0" cy="0.2" r="12.6" fill="#ececec" stroke="#7e57c2" stroke-width="2.6"/><path d="M 0,0.2 L 0,-12 A 12.2,12.2 0 0,1 12.2,0.2 z" fill="#ffccbc"/><path d="M 0,-8.5 V 0.2 H 9" fill="none" stroke="#455a64" stroke-width="1.7"/><path d="M -11,0.2 h 3 M 0,11.4 v -3" stroke="#455a64" stroke-width="1.5"/><circle cx="0" cy="0.2" r="1.7" fill="#78909c" stroke="#455a64" stroke-width="0.8"/><circle cx="4" cy="-10.2" r="1.2" fill="#ff8a65"/><circle cx="11.3" cy="-6.4" r="1.1" fill="#ff8a65"/><path d="M 3.8,-4.4 l 2.4,1.3 l -2.4,1.3 z" fill="#ff7043"/></g>
<g transform="translate(32,838)"><rect x="-13" y="-11" width="25" height="22" rx="1.5" fill="#e8eaf6"/><rect x="-13" y="-11" width="25" height="6" rx="1.5" fill="#f4364c"/><rect x="-13" y="7.5" width="25" height="3.5" fill="#c5cae9"/><rect x="-7.8" y="-14" width="2.4" height="5" rx="1.2" fill="#cfd8dc"/><rect x="3.4" y="-14" width="2.4" height="5" rx="1.2" fill="#cfd8dc"/><rect x="-11" y="-3.3" width="1.9" height="1.9" fill="#3949ab"/><rect x="-7.15" y="-3.3" width="1.9" height="1.9" fill="#3949ab"/><rect x="-3.3" y="-3.3" width="1.9" height="1.9" fill="#3949ab"/><rect x="0.55" y="-3.3" width="1.9" height="1.9" fill="#3949ab"/><rect x="4.4" y="-3.3" width="1.9" height="1.9" fill="#3949ab"/><rect x="8.25" y="-3.3" width="1.9" height="1.9" fill="#3949ab"/><rect x="-11" y="0.6" width="1.9" height="1.9" fill="#3949ab"/><rect x="-7.15" y="0.6" width="1.9" height="1.9" fill="#3949ab"/><rect x="-3.3" y="0.6" width="1.9" height="1.9" fill="#3949ab"/><rect x="0.55" y="0.6" width="1.9" height="1.9" fill="#3949ab"/><rect x="4.4" y="0.6" width="1.9" height="1.9" fill="#3949ab"/><rect x="8.25" y="0.6" width="1.9" height="1.9" fill="#3949ab"/><rect x="-11" y="4.5" width="1.9" height="1.9" fill="#3949ab"/><rect x="-7.15" y="4.5" width="1.9" height="1.9" fill="#3949ab"/><rect x="-3.3" y="4.5" width="1.9" height="1.9" fill="#3949ab"/><circle cx="6.3" cy="6.8" r="6.6" fill="#1e88e5"/><circle cx="6.3" cy="6.8" r="4.9" fill="#f5f5f5"/><path d="M 6.3,3.8 V 6.8 H 8.8" fill="none" stroke="#455a64" stroke-width="1"/><circle cx="6" cy="7" r="0.9" fill="#fbc02d"/></g>
<g transform="translate(32,888)"><path d="M -13,-3.8 A 17,17 0 0,1 13,-3.8" fill="none" stroke="#29b6f6" stroke-width="3.6" stroke-linecap="round"/><path d="M -13,-3.8 A 17,17 0 0,1 0,-9.6" fill="none" stroke="#00d4ff" stroke-width="3.6" stroke-linecap="round"/><path d="M -7,1.3 A 9.5,9.5 0 0,1 7,1.3" fill="none" stroke="#5c7cfa" stroke-width="3.6" stroke-linecap="round"/><path d="M -7,1.3 A 9.5,9.5 0 0,1 0,-2" fill="none" stroke="#29a3ff" stroke-width="3.6" stroke-linecap="round"/><circle cx="0" cy="7.2" r="2.5" fill="#5c5cf7"/></g>
<g transform="translate(32,938)"><clipPath id="btc"><rect x="-11" y="-17" width="22" height="34" rx="11"/></clipPath><g clip-path="url(#btc)"><rect x="-11" y="-17" width="22" height="17.5" fill="#29b6f6"/><rect x="-11" y="0.5" width="22" height="17" fill="#2979ff"/></g><path d="M -5.2,-4.5 L 5.3,4.6 L 0,9.8 V -9.8 L 5.3,-4.8 L -5.2,4.5" fill="none" stroke="#e8fbff" stroke-width="1.9" stroke-linejoin="round" stroke-linecap="round"/></g>
<g transform="translate(32,988)"><path d="M -12,-8 v -4 h 4.5 M -12,8 v 4 h 4.5" fill="none" stroke="#7fd0ff" stroke-width="1.3"/><path d="M 12,-8 v -4 h -4.5 M 12,8 v 4 h -4.5" fill="none" stroke="#6a8cf7" stroke-width="1.3"/><text x="0" y="-0.3" font-size="12.5" font-weight="bold" fill="#1f3064" text-anchor="middle" textLength="13.5" lengthAdjust="spacing">01</text><text x="0" y="10.8" font-size="12.5" font-weight="bold" fill="#1f3064" text-anchor="middle" textLength="13.5" lengthAdjust="spacing">10</text></g>
<g transform="translate(32,1038)"><defs><linearGradient id="cld" x1="0" y1="0" x2="1" y2="0.6"><stop offset="0" stop-color="#29c3f6"/><stop offset="1" stop-color="#1a56d6"/></linearGradient></defs><path d="M -9,8 a 5.6,5.6 0 0,1 -1,-11 a 8,8 0 0,1 14.6,-3.2 a 6.4,6.4 0 0,1 9,6.4 a 4,4 0 0,1 -1.6,7.8 z" fill="url(#cld)"/></g>
</svg>
<div id="header"></div><div id="hshadow"></div>
<div id="status"></div><div id="botline"></div>
<svg width="1920" height="1080" viewBox="0 0 1920 1080" style="z-index:5">
<g transform="translate(4.5,4) scale(0.35)"><defs><linearGradient id="lg4" x1="0" y1="0" x2="1" y2="1"><stop offset="0" stop-color="#5fae48"/><stop offset="1" stop-color="#1f93a8"/></linearGradient></defs><path d="M 8,10 V 5 a 3.5,3.5 0 0,1 3.5,-3.5 H 27 a 10,10 0 0,1 6.5,17.8 a 11.5,11.5 0 0,1 -5.5,22.2 H 10" fill="none" stroke="url(#lg4)" stroke-width="1.8" stroke-linecap="round"/><path d="M 14.5,20.5 H 30" fill="none" stroke="#2b97b0" stroke-width="1.8" stroke-linecap="round"/><path d="M 17,8.5 h 10 a 3.2,3.2 0 0,1 0,6.4 h -10 z" fill="url(#lg4)"/><path d="M 17,27 h 13 a 4,4 0 0,1 0,8 h -13 z" fill="url(#lg4)"/><circle cx="8" cy="11.5" r="1.9" fill="#2b97b0"/><circle cx="14.5" cy="20.5" r="1.9" fill="#2b97b0"/><circle cx="8" cy="29.5" r="1.9" fill="#2b97b0"/><path d="M 8,29.5 V 38" stroke="#2b97b0" stroke-width="1.8" fill="none"/><path d="M 0.5,29 c 4,0.5 7,3.5 7.5,9 c -4.5,0 -7.5,-3.5 -7.5,-9 z" fill="#55a845"/><path d="M 8.5,38.5 c 0.5,-3 2.5,-4.8 5.5,-5 c 0,3 -2,5 -5.5,5 z" fill="#55a845"/></g>
<text x="23.1" y="15.7" font-size="12" fill="#000" textLength="553.5" lengthAdjust="spacingAndGlyphs">B-Farm 1.0.0 | By HandySense [ new file ] &lt;&lt; Example Mode :: this mode will not save persistence data &gt;&gt;</text>
<path d="M 1798.5,10.5 H 1809.5" stroke="#000" stroke-width="1"/>
<path d="M 1843.5,7.5 h 8 v 8 h -8 z M 1845.5,7.5 v -2 h 8 v 8 h -2" stroke="#000" stroke-width="1" fill="none"/>
<path d="M 1889.5,5 l 10.5,10.5 M 1900,5 l -10.5,10.5" stroke="#000" stroke-width="1.1" fill="none"/>
<text x="6.25" y="36.8" font-size="12" fill="#000" textLength="17.7" lengthAdjust="spacingAndGlyphs">File</text>
<text x="36.25" y="36.8" font-size="12" fill="#000" textLength="19.8" lengthAdjust="spacingAndGlyphs">Edit</text>
<text x="69.2" y="36.8" font-size="12" fill="#000" textLength="25.3" lengthAdjust="spacingAndGlyphs">View</text>
<text x="107.5" y="36.8" font-size="12" fill="#000" textLength="26.5" lengthAdjust="spacingAndGlyphs">Tools</text>
<text x="147.3" y="36.8" font-size="12" fill="#000" textLength="43.3" lengthAdjust="spacingAndGlyphs">Window</text>
<text x="203" y="36.8" font-size="12" fill="#000" textLength="24.8" lengthAdjust="spacingAndGlyphs">Help</text>
<g transform="translate(43,55.5) scale(1)"><defs><linearGradient id="lg43" x1="0" y1="0" x2="1" y2="1"><stop offset="0" stop-color="#5fae48"/><stop offset="1" stop-color="#1f93a8"/></linearGradient></defs><path d="M 8,10 V 5 a 3.5,3.5 0 0,1 3.5,-3.5 H 27 a 10,10 0 0,1 6.5,17.8 a 11.5,11.5 0 0,1 -5.5,22.2 H 10" fill="none" stroke="url(#lg43)" stroke-width="1.8" stroke-linecap="round"/><path d="M 14.5,20.5 H 30" fill="none" stroke="#2b97b0" stroke-width="1.8" stroke-linecap="round"/><path d="M 17,8.5 h 10 a 3.2,3.2 0 0,1 0,6.4 h -10 z" fill="url(#lg43)"/><path d="M 17,27 h 13 a 4,4 0 0,1 0,8 h -13 z" fill="url(#lg43)"/><circle cx="8" cy="11.5" r="1.9" fill="#2b97b0"/><circle cx="14.5" cy="20.5" r="1.9" fill="#2b97b0"/><circle cx="8" cy="29.5" r="1.9" fill="#2b97b0"/><path d="M 8,29.5 V 38" stroke="#2b97b0" stroke-width="1.8" fill="none"/><path d="M 0.5,29 c 4,0.5 7,3.5 7.5,9 c -4.5,0 -7.5,-3.5 -7.5,-9 z" fill="#55a845"/><path d="M 8.5,38.5 c 0.5,-3 2.5,-4.8 5.5,-5 c 0,3 -2,5 -5.5,5 z" fill="#55a845"/></g>
<text x="101" y="91.4" font-size="36" font-weight="bold" fill="#62a844" stroke="#ffffff" stroke-opacity="0.55" stroke-width="2.2" paint-order="stroke" textLength="129" lengthAdjust="spacingAndGlyphs">B–Farm</text>
<rect x="282" y="54" width="154" height="48" rx="24" fill="#dfdfdf" stroke="#b5b5b5" stroke-width="4"/>
<rect x="285.7" y="57" width="74.3" height="41" rx="20.5" fill="#66a846"/>
<text x="305.8" y="82.1" font-size="14.5" fill="#fff" textLength="34.7" lengthAdjust="spacingAndGlyphs" font-weight="bold">Block</text>
<text x="380.9" y="82.1" font-size="14.5" fill="#333" textLength="31.3" lengthAdjust="spacingAndGlyphs">Code</text>
<circle cx="473.85" cy="77.9" r="23" fill="#e1e1e1" stroke="#b7b7b7" stroke-width="4"/><circle cx="473.85" cy="77.9" r="19.5" fill="none" stroke="#ececec" stroke-width="1.5"/>
<circle cx="536" cy="77.9" r="23" fill="#e1e1e1" stroke="#b7b7b7" stroke-width="4"/><circle cx="536" cy="77.9" r="19.5" fill="none" stroke="#ececec" stroke-width="1.5"/>
<circle cx="598.1" cy="77.9" r="23" fill="#e1e1e1" stroke="#b7b7b7" stroke-width="4"/><circle cx="598.1" cy="77.9" r="19.5" fill="none" stroke="#ececec" stroke-width="1.5"/>
<circle cx="659.9" cy="77.9" r="23" fill="#e1e1e1" stroke="#b7b7b7" stroke-width="4"/><circle cx="659.9" cy="77.9" r="19.5" fill="none" stroke="#ececec" stroke-width="1.5"/>
<g transform="translate(473.85,77.9)" fill="#68ab46"><path d="M -5,-9.8 H 8.5 a 1.8,1.8 0 0,1 1.7,2.3 L 5.6,7 a 2.5,2.5 0 0,1 -2.4,1.8 H -9 a 2.4,2.4 0 0,1 -2.3,-3 L -7.4,-8 a 2.5,2.5 0 0,1 2.4,-1.8 z"/><path d="M -10.8,7.5 a 2.6,2.6 0 0,0 2.4,3.6 H 4.5 a 3,3 0 0,0 2.8,-2 L 11.6,-5.5" fill="none" stroke="#68ab46" stroke-width="1.3"/><path d="M -3.3,-6 H 6 M -4.3,-2.6 H 5" stroke="#e8e8e8" stroke-width="1.5" fill="none"/></g>
<g transform="translate(536,77.9)" fill="#68ab46"><path d="M -9.5,-10.5 a 1.2,1.2 0 0,1 1.2,-1.2 H 3 V -3.5 H 10.5 V 10.8 a 1.2,1.2 0 0,1 -1.2,1.2 H -8.3 a 1.2,1.2 0 0,1 -1.2,-1.2 z"/><path d="M 4.6,-11.4 L 10.2,-5.2 H 4.6 z"/><path d="M -5,0.2 H 5.3 M -5,3.8 H 5.3 M -5,7.4 H 5.3" stroke="#e8e8e8" stroke-width="1.4" fill="none"/></g>
<g transform="translate(598.1,77.9)" fill="#68ab46"><path d="M -11,-7.2 a 2.2,2.2 0 0,1 2.2,-2.2 H -3.3 a 2.2,2.2 0 0,1 2.2,2.2 V -5.6 H 9 a 2.2,2.2 0 0,1 2.2,2.2 V 7 a 2.2,2.2 0 0,1 -2.2,2.2 H -8.8 a 2.2,2.2 0 0,1 -2.2,-2.2 z"/></g>
<g transform="translate(659.9,77.9)"><path d="M -9.6,-9.8 H 5.2 L 9.8,-5.2 V 9.2 a 1,1 0 0,1 -1,1 H -8.6 a 1,1 0 0,1 -1,-1 z" fill="none" stroke="#68ab46" stroke-width="1.9" stroke-linejoin="round"/><path d="M -6.2,-9.8 V -3.6 H 3.6 V -9.8 z" fill="#68ab46"/><rect x="-0.3" y="-8.6" width="2.3" height="3.8" fill="#e1e1e1"/><path d="M -6,10 V 2.3 H 6 V 10" fill="none" stroke="#68ab46" stroke-width="1.9"/></g>
<circle cx="1571" cy="77.9" r="23" fill="none" stroke="#fff" stroke-opacity="0.45" stroke-width="4"/><circle cx="1571" cy="77.9" r="19.4" fill="#f4f4f4"/>
<circle cx="1633.1" cy="77.9" r="23" fill="none" stroke="#fff" stroke-opacity="0.45" stroke-width="4"/><circle cx="1633.1" cy="77.9" r="19.4" fill="#f4f4f4"/>
<circle cx="1695" cy="77.9" r="23" fill="none" stroke="#fff" stroke-opacity="0.45" stroke-width="4"/><circle cx="1695" cy="77.9" r="19.4" fill="#f4f4f4"/>
<circle cx="1757" cy="77.9" r="23" fill="none" stroke="#fff" stroke-opacity="0.45" stroke-width="4"/><circle cx="1757" cy="77.9" r="19.4" fill="#f4f4f4"/>
<path d="M 1562.8,78.5 l 5.3,5.3 l 10.2,-10.4" fill="none" stroke="#63a843" stroke-width="4.6" stroke-linejoin="miter"/>
<path d="M 1624.6,67.5 v 21 l 19.5,-10.5 z" fill="#63a843"/>
<path d="M 1699.39,81.2 L 1698.24,84 L 1696.15,83.16 L 1694.69,84.63 L 1695.54,86.72 L 1692.74,87.88 L 1691.85,85.82 L 1689.79,85.82 L 1688.9,87.89 L 1686.1,86.74 L 1686.94,84.65 L 1685.47,83.19 L 1683.38,84.04 L 1682.22,81.24 L 1684.28,80.35 L 1684.28,78.29 L 1682.21,77.4 L 1683.36,74.6 L 1685.45,75.44 L 1686.91,73.97 L 1686.06,71.88 L 1688.86,70.72 L 1689.75,72.78 L 1691.81,72.78 L 1692.7,70.71 L 1695.5,71.86 L 1694.66,73.95 L 1696.13,75.41 L 1698.22,74.56 L 1699.38,77.36 L 1697.32,78.25 L 1697.32,80.31 z M 1687.5,79.3 a 3.3,3.3 0 1,0 6.6,0 a 3.3,3.3 0 1,0 -6.6,0 z" fill="#63a843" fill-rule="evenodd"/>
<path d="M 1708.03,70.66 L 1708.03,72.34 L 1706.7,72.34 L 1706.27,73.38 L 1707.21,74.32 L 1706.02,75.51 L 1705.08,74.57 L 1704.04,75 L 1704.04,76.33 L 1702.36,76.33 L 1702.36,75 L 1701.32,74.57 L 1700.38,75.51 L 1699.19,74.32 L 1700.13,73.38 L 1699.7,72.34 L 1698.37,72.34 L 1698.37,70.66 L 1699.7,70.66 L 1700.13,69.62 L 1699.19,68.68 L 1700.38,67.49 L 1701.32,68.43 L 1702.36,68 L 1702.36,66.67 L 1704.04,66.67 L 1704.04,68 L 1705.08,68.43 L 1706.02,67.49 L 1707.21,68.68 L 1706.27,69.62 L 1706.7,70.66 z M 1701.5,71.5 a 1.7,1.7 0 1,0 3.4,0 a 1.7,1.7 0 1,0 -3.4,0 z" fill="#63a843" fill-rule="evenodd"/>
<path d="M 1708.03,84.96 L 1708.03,86.64 L 1706.7,86.64 L 1706.27,87.68 L 1707.21,88.62 L 1706.02,89.81 L 1705.08,88.87 L 1704.04,89.3 L 1704.04,90.63 L 1702.36,90.63 L 1702.36,89.3 L 1701.32,88.87 L 1700.38,89.81 L 1699.19,88.62 L 1700.13,87.68 L 1699.7,86.64 L 1698.37,86.64 L 1698.37,84.96 L 1699.7,84.96 L 1700.13,83.92 L 1699.19,82.98 L 1700.38,81.79 L 1701.32,82.73 L 1702.36,82.3 L 1702.36,80.97 L 1704.04,80.97 L 1704.04,82.3 L 1705.08,82.73 L 1706.02,81.79 L 1707.21,82.98 L 1706.27,83.92 L 1706.7,84.96 z M 1701.5,85.8 a 1.7,1.7 0 1,0 3.4,0 a 1.7,1.7 0 1,0 -3.4,0 z" fill="#63a843" fill-rule="evenodd"/>
<path d="M 1748.4,72.2 l 6,5.2 l -6,5.2" fill="none" stroke="#63a843" stroke-width="1.7"/><path d="M 1756.7,85.8 h 11.5" stroke="#63a843" stroke-width="1.7"/>
<path d="M 1792.6,51 V 104" stroke="#fff" stroke-opacity="0.55" stroke-width="1.2"/>
<rect x="1820" y="65" width="76" height="24.7" rx="12.35" fill="#fff" fill-opacity="0.2"/>
<text x="1830.2" y="82" font-size="13.5" fill="#fff" textLength="55.7" lengthAdjust="spacingAndGlyphs" font-weight="bold">ver. 1.0.0</text>
<g fill="#6a6a6a"><rect x="18.5" y="1069.5" width="6" height="9" rx="0.8"/><path d="M 16.5,1071 h 2 M 16.5,1073 h 2 M 16.5,1075 h 2 M 16.5,1077 h 2 M 24.5,1071 h 2 M 24.5,1073 h 2 M 24.5,1075 h 2 M 24.5,1077 h 2" stroke="#6a6a6a" stroke-width="1"/></g>
<text x="31" y="1078.3" font-size="12" fill="#333" textLength="203" lengthAdjust="spacingAndGlyphs">Board : HandySense Pro (handysense)</text>
<text x="777" y="1078.3" font-size="12" fill="#333" textLength="45" lengthAdjust="spacingAndGlyphs">Mode : 1</text>
<text x="1846" y="1078.3" font-size="12" fill="#333" textLength="57.5" lengthAdjust="spacingAndGlyphs">deselected</text>
<g fill="#6e6e6e"><rect x="1824" y="1072.6" width="9.8" height="6" rx="0.6"/><rect x="1827.9" y="1069" width="1.8" height="4"/><circle cx="1828.8" cy="1068.8" r="1.2"/><circle cx="1835.2" cy="1076.2" r="1.4"/><rect x="1826.3" y="1077" width="2.2" height="2" fill="#fff"/></g>
<path d="M 639.5,1064 V 1080 M 959.5,1064 V 1080" stroke="#e2e2e2" stroke-width="1"/>
</svg>
</body></html>
